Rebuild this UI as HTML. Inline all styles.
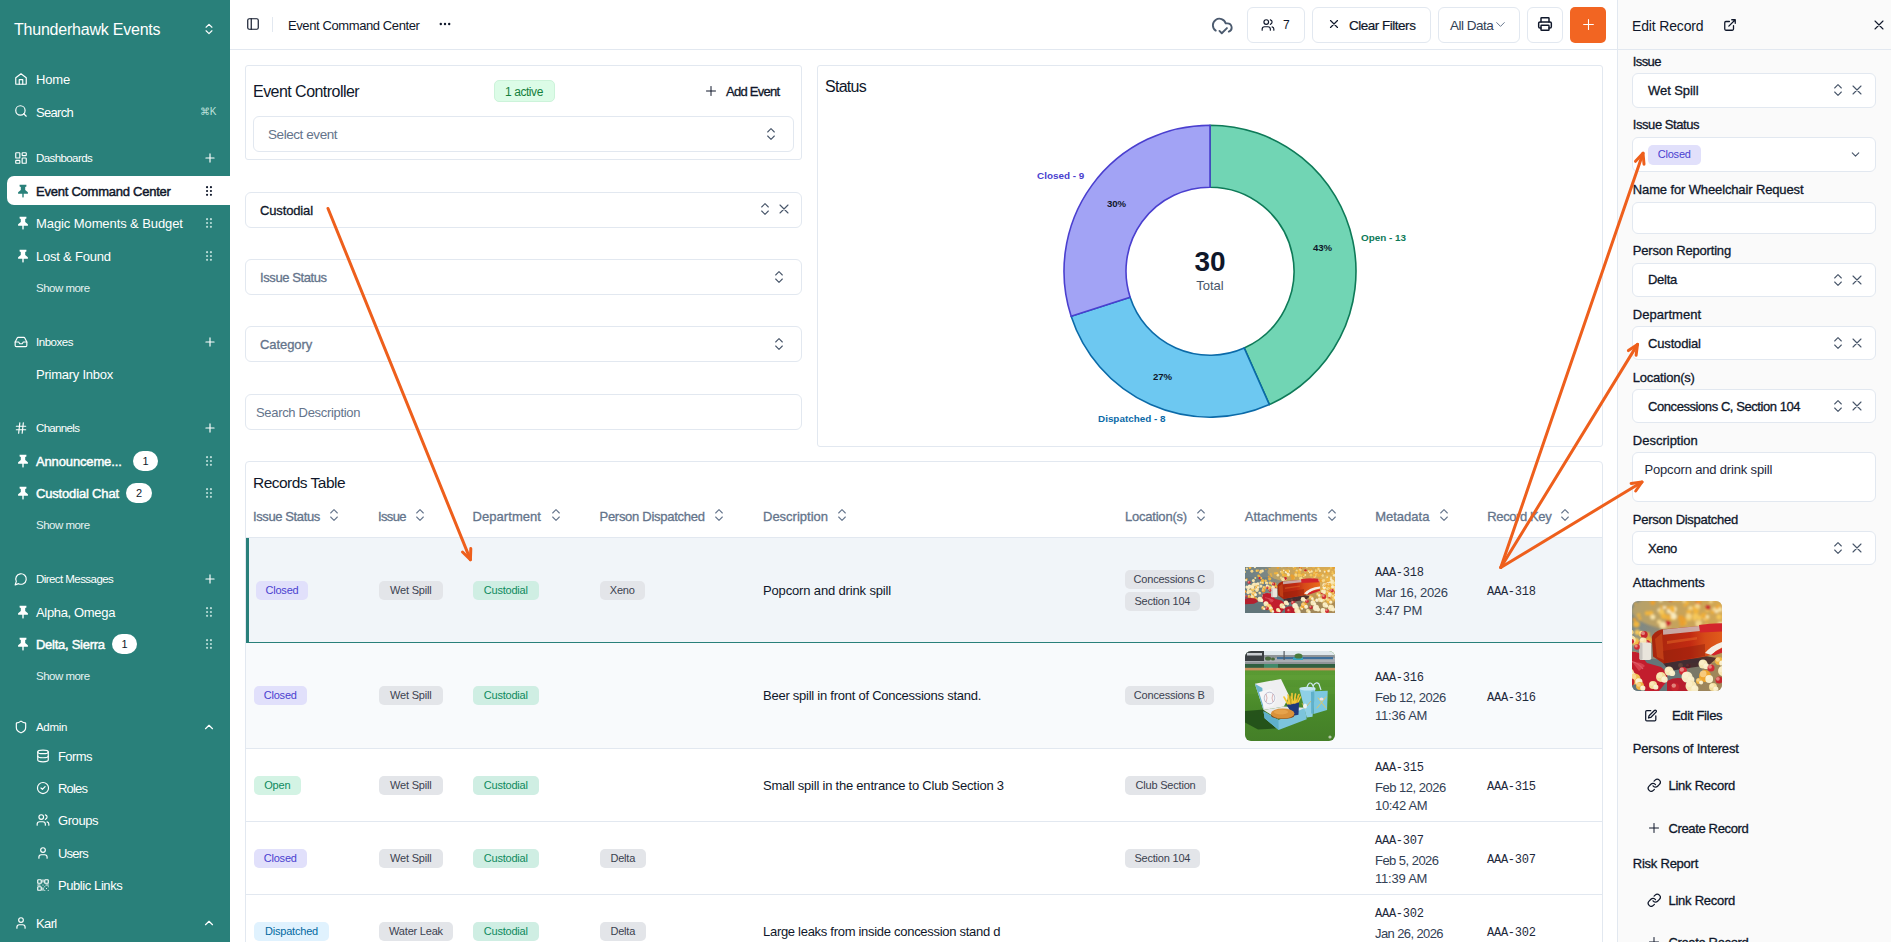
<!DOCTYPE html>
<html lang="en"><head>
<meta charset="utf-8">
<title>Event Command Center</title>
<style>
*{box-sizing:border-box;margin:0;padding:0}
html,body{width:1891px;height:942px;overflow:hidden;background:#fff}
body{font-family:"Liberation Sans",sans-serif;color:#0f172a;font-size:13px;position:relative;letter-spacing:-0.25px}
.abs{position:absolute}
.t{position:absolute;white-space:nowrap;line-height:1}
svg{display:block}
svg.ic{position:absolute;fill:none;stroke:currentColor;stroke-width:2;stroke-linecap:round;stroke-linejoin:round}
/* sidebar */
#sb{position:absolute;left:0;top:0;width:230px;height:942px;background:#29807a;color:#fff}
#sb .t{font-size:13px;margin-top:1px}
#sb .sec{font-size:11.5px}
#sb .sm{font-size:11.5px;color:#e6f2f1}
#sb .b{-webkit-text-stroke:0.45px}
.badge{position:absolute;height:20px;border-radius:10px;background:#fff;color:#0f172a;font-size:11px;text-align:center;line-height:20px;width:25px}
/* main */
.card{position:absolute;border:1px solid #e2e8f0;border-radius:3px;background:#fff}
.inp{position:absolute;border:1px solid #e2e8f0;border-radius:6px;background:#fff}
.ph{color:#64748b}
.btn{position:absolute;top:7px;height:35.500px;border:1px solid #e2e8f0;border-radius:6px;background:#fff}
.pill{position:absolute;height:19px;line-height:19px;border-radius:5px;font-size:11px;padding:0 10px;white-space:nowrap;letter-spacing:-0.2px}
.md{-webkit-text-stroke:0.3px}
.pill{text-align:center;padding:0}
.p-cl{background:#e1e0fb;color:#4a3fd0}
.p-op{background:#d3f3e4;color:#0e8a5e}
.p-di{background:#e0f2fe;color:#0369a1}
.p-gr{background:#e3e5e9;color:#3b4250}
.p-cu{background:#cfeee3;color:#0e8a5e}
.mono{font-family:"Liberation Mono",monospace;letter-spacing:-0.6px}
.th{position:absolute;top:510px;font-size:13px;color:#64748b;white-space:nowrap;line-height:1}
.lbl{position:absolute;left:1632px;font-size:13px;font-weight:bold;color:#0f172a;white-space:nowrap;line-height:1;letter-spacing:-0.45px}
.val{position:absolute;font-size:13px;font-weight:bold;color:#0f172a;white-space:nowrap;line-height:1;letter-spacing:-0.45px}
.lbl2{position:absolute;left:1632.800px;font-size:13px;color:#0f172a;white-space:nowrap;line-height:1;letter-spacing:-0.12px}
.val2{position:absolute;font-size:13px;color:#0f172a;white-space:nowrap;line-height:1;letter-spacing:-0.1px}
.bt2{letter-spacing:-0.32px}
</style>
</head>
<body>

<!-- ================= SIDEBAR ================= -->
<div id="sb">
  <div class="t" style="left: 14px; top: 20.5px; font-size: 16px; letter-spacing: -0.22px;">Thunderhawk Events</div>
  <svg class="ic" style="left:202px;top:22px" width="14" height="14" viewBox="0 0 24 24"><path d="M7 15l5 5 5-5M7 9l5-5 5 5"></path></svg>

  <svg class="ic" style="left:14px;top:72px" width="14" height="14" viewBox="0 0 24 24"><path d="M3 10l9-7 9 7v10a1 1 0 0 1-1 1H4a1 1 0 0 1-1-1z"></path><path d="M9 21v-8h6v8"></path></svg>
  <div class="t" style="left: 36px; top: 72px; letter-spacing: -0.17px;">Home</div>
  <svg class="ic" style="left:14px;top:104px" width="14" height="14" viewBox="0 0 24 24"><circle cx="11" cy="11" r="8"></circle><path d="M21 21l-4.3-4.3"></path></svg>
  <div class="t" style="left: 36px; top: 105px; letter-spacing: -0.7px;">Search</div>
  <div class="t" style="left:200px;top:106px;font-size:10px;color:#bfe0dc">⌘K</div>

  <svg class="ic" style="left:14px;top:151px" width="14" height="14" viewBox="0 0 24 24"><rect x="3" y="3" width="7" height="9" rx="1"></rect><rect x="14" y="3" width="7" height="5" rx="1"></rect><rect x="14" y="12" width="7" height="9" rx="1"></rect><rect x="3" y="16" width="7" height="5" rx="1"></rect></svg>
  <div class="t sec" style="left: 36px; top: 152px; letter-spacing: -0.59px;">Dashboards</div>
  <svg class="ic" style="left:203px;top:151px" width="14" height="14" viewBox="0 0 24 24"><path d="M5 12h14M12 5v14"></path></svg>

  <div class="abs" style="left:7px;top:176px;width:223px;height:29px;background:#fff;border-radius:7px 0 0 7px"></div>
  <div class="t b" style="left: 36px; top: 184px; color: rgb(15, 23, 42); letter-spacing: -0.24px;">Event Command Center</div>
  <div class="t" style="left: 36px; top: 216px; letter-spacing: -0.09px;">Magic Moments &amp; Budget</div>
  <div class="t" style="left: 36px; top: 249px; letter-spacing: -0.22px;">Lost &amp; Found</div>
  <div class="t sm" style="left: 36px; top: 282px; letter-spacing: -0.51px;">Show more</div>

  <svg class="ic" style="left:14px;top:335px" width="14" height="14" viewBox="0 0 24 24"><path d="M22 12h-6l-2 3h-4l-2-3H2"></path><path d="M5.5 5.1L2 12v6a2 2 0 0 0 2 2h16a2 2 0 0 0 2-2v-6l-3.5-6.9A2 2 0 0 0 16.8 4H7.2a2 2 0 0 0-1.7 1.1z"></path></svg>
  <div class="t sec" style="left: 36px; top: 336px; letter-spacing: -0.48px;">Inboxes</div>
  <svg class="ic" style="left:203px;top:335px" width="14" height="14" viewBox="0 0 24 24"><path d="M5 12h14M12 5v14"></path></svg>
  <div class="t" style="left: 36px; top: 367px; letter-spacing: -0.25px;">Primary Inbox</div>

  <svg class="ic" style="left:14px;top:421px" width="14" height="14" viewBox="0 0 24 24"><path d="M4 9h16M4 15h16M10 3L8 21M16 3l-2 18"></path></svg>
  <div class="t sec" style="left: 36px; top: 422px; letter-spacing: -0.67px;">Channels</div>
  <svg class="ic" style="left:203px;top:421px" width="14" height="14" viewBox="0 0 24 24"><path d="M5 12h14M12 5v14"></path></svg>
  <div class="t b" style="left: 36px; top: 454px; letter-spacing: -0.14px;">Announceme...</div>
  <div class="badge" style="left:133px;top:451px">1</div>
  <div class="t b" style="left: 36px; top: 486px; letter-spacing: -0.17px;">Custodial Chat</div>
  <div class="badge" style="left:126px;top:483px;width:26px">2</div>
  <div class="t sm" style="left: 36px; top: 519px; letter-spacing: -0.51px;">Show more</div>

  <svg class="ic" style="left:14px;top:572px" width="14" height="14" viewBox="0 0 24 24"><path d="M7.9 20A9 9 0 1 0 4 16.1L2 22z"></path></svg>
  <div class="t sec" style="left: 36px; top: 573px; letter-spacing: -0.56px;">Direct Messages</div>
  <svg class="ic" style="left:203px;top:572px" width="14" height="14" viewBox="0 0 24 24"><path d="M5 12h14M12 5v14"></path></svg>
  <div class="t" style="left: 36px; top: 605px; letter-spacing: -0.34px;">Alpha, Omega</div>
  <div class="t b" style="left: 36px; top: 637px; letter-spacing: -0.27px;">Delta, Sierra</div>
  <div class="badge" style="left:112px;top:634px">1</div>
  <div class="t sm" style="left: 36px; top: 670px; letter-spacing: -0.51px;">Show more</div>

  <svg class="ic" style="left:14px;top:720px" width="14" height="14" viewBox="0 0 24 24"><path d="M20 13c0 5-3.5 7.500-7.660 8.950a1 1 0 0 1-.670-.010C7.500 20.500 4 18 4 13V6a1 1 0 0 1 1-1c2 0 4.500-1.200 6.240-2.720a1.170 1.170 0 0 1 1.520 0C14.510 3.810 17 5 19 5a1 1 0 0 1 1 1z"></path></svg>
  <div class="t sec" style="left: 36px; top: 721px; letter-spacing: -0.32px;">Admin</div>
  <svg class="ic" style="left:202px;top:720px" width="14" height="14" viewBox="0 0 24 24"><path d="M18 15l-6-6-6 6"></path></svg>

  <svg class="ic" style="left:36px;top:749px" width="14" height="14" viewBox="0 0 24 24"><ellipse cx="12" cy="5" rx="9" ry="3"></ellipse><path d="M3 5v14a9 3 0 0 0 18 0V5"></path><path d="M3 12a9 3 0 0 0 18 0"></path></svg>
  <div class="t" style="left: 58px; top: 749px; letter-spacing: -0.59px;">Forms</div>
  <svg class="ic" style="left:36px;top:781px" width="14" height="14" viewBox="0 0 24 24"><circle cx="12" cy="12" r="9.500"></circle><path d="M8.500 12l2.500 2.500 4.500-5"></path></svg>
  <div class="t" style="left: 58px; top: 781px; letter-spacing: -0.81px;">Roles</div>
  <svg class="ic" style="left:36px;top:813px" width="14" height="14" viewBox="0 0 24 24"><path d="M16 21v-2a4 4 0 0 0-4-4H6a4 4 0 0 0-4 4v2"></path><circle cx="9" cy="7" r="4"></circle><path d="M22 21v-2a4 4 0 0 0-3-3.870M16 3.130a4 4 0 0 1 0 7.750"></path></svg>
  <div class="t" style="left: 58px; top: 813px; letter-spacing: -0.42px;">Groups</div>
  <svg class="ic" style="left:36px;top:846px" width="14" height="14" viewBox="0 0 24 24"><path d="M19 21v-2a4 4 0 0 0-4-4H9a4 4 0 0 0-4 4v2"></path><circle cx="12" cy="7" r="4"></circle></svg>
  <div class="t" style="left: 58px; top: 846px; letter-spacing: -0.79px;">Users</div>
  <svg class="ic" style="left:36px;top:878px" width="14" height="14" viewBox="0 0 24 24"><rect x="3" y="3" width="6" height="6" rx="1"></rect><rect x="15" y="3" width="6" height="6" rx="1"></rect><rect x="3" y="15" width="6" height="6" rx="1"></rect><path d="M21 15v.01M15 15h.01M15 21h.01M21 21v-.01M18 18h.01M12 3v4M12 12h.01M3 12h4M12 17v4M17 12h4"></path></svg>
  <div class="t" style="left: 58px; top: 878px; letter-spacing: -0.42px;">Public Links</div>

  <svg class="ic" style="left:14px;top:916px" width="14" height="14" viewBox="0 0 24 24"><path d="M19 21v-2a4 4 0 0 0-4-4H9a4 4 0 0 0-4 4v2"></path><circle cx="12" cy="7" r="4"></circle></svg>
  <div class="t" style="left: 36px; top: 916px; letter-spacing: -0.63px;">Karl</div>
  <svg class="ic" style="left:202px;top:916px" width="14" height="14" viewBox="0 0 24 24"><path d="M18 15l-6-6-6 6"></path></svg>
</div>
<svg width="0" height="0" style="position:absolute"><defs>
  <symbol id="pin" viewBox="0 0 12 14"><path d="M2.600 0.800h6.800v1.600l-1.200 0.700v2.800l2.700 2.400v1.500h-4.200v3l-0.700 1.200-0.700-1.200v-3h-4.200v-1.500l2.700-2.400v-2.800l-1.200-0.700z"></path></symbol>
  <symbol id="grip" viewBox="0 0 8 12"><circle cx="2.050" cy="2.200" r="1.100"></circle><circle cx="5.950" cy="2.200" r="1.100"></circle><circle cx="2.050" cy="6" r="1.100"></circle><circle cx="5.950" cy="6" r="1.100"></circle><circle cx="2.050" cy="9.800" r="1.100"></circle><circle cx="5.950" cy="9.800" r="1.100"></circle></symbol>
</defs></svg>
<svg class="abs" style="left:17px;top:184px;fill:#29807a" width="12" height="14"><use href="#pin"></use></svg>
<svg class="abs" style="left:17px;top:216px;fill:#fff" width="12" height="14"><use href="#pin"></use></svg>
<svg class="abs" style="left:17px;top:249px;fill:#fff" width="12" height="14"><use href="#pin"></use></svg>
<svg class="abs" style="left:17px;top:454px;fill:#fff" width="12" height="14"><use href="#pin"></use></svg>
<svg class="abs" style="left:17px;top:486px;fill:#fff" width="12" height="14"><use href="#pin"></use></svg>
<svg class="abs" style="left:17px;top:605px;fill:#fff" width="12" height="14"><use href="#pin"></use></svg>
<svg class="abs" style="left:17px;top:637px;fill:#fff" width="12" height="14"><use href="#pin"></use></svg>
<svg class="abs" style="left:205px;top:185px;fill:#0f172a" width="8" height="12"><use href="#grip"></use></svg>
<svg class="abs" style="left:205px;top:217px;fill:#b9dcd8" width="8" height="12"><use href="#grip"></use></svg>
<svg class="abs" style="left:205px;top:250px;fill:#b9dcd8" width="8" height="12"><use href="#grip"></use></svg>
<svg class="abs" style="left:205px;top:455px;fill:#b9dcd8" width="8" height="12"><use href="#grip"></use></svg>
<svg class="abs" style="left:205px;top:487px;fill:#b9dcd8" width="8" height="12"><use href="#grip"></use></svg>
<svg class="abs" style="left:205px;top:606px;fill:#b9dcd8" width="8" height="12"><use href="#grip"></use></svg>
<svg class="abs" style="left:205px;top:638px;fill:#b9dcd8" width="8" height="12"><use href="#grip"></use></svg>


<!-- ================= HEADER ================= -->
<div class="abs" style="left:230px;top:49px;width:1661px;height:1px;background:#e2e8f0"></div>
<div style="color:#0f172a">
<svg class="ic" style="left:246px;top:17px;stroke-width:2" width="14" height="14" viewBox="0 0 24 24"><rect x="3" y="3" width="18" height="18" rx="2.500"></rect><path d="M9 3v18"></path></svg>
<div class="abs" style="left:272px;top:17px;width:1px;height:15px;background:#e2e8f0"></div>
<div class="t" style="left: 288px; top: 19px; font-size: 13px; letter-spacing: -0.4px;">Event Command Center</div>
<svg class="abs" style="left:439px;top:22px;fill:#0f172a" width="12" height="4" viewBox="0 0 12 4"><circle cx="1.800" cy="2" r="1.200"></circle><circle cx="6" cy="2" r="1.200"></circle><circle cx="10.200" cy="2" r="1.200"></circle></svg>

<svg class="ic" style="left:1210.500px;top:14px;color:#4b5a6e;stroke-width:2" width="22.500" height="22.500" viewBox="0 0 24 24"><path d="M17 15l-5.500 5.500L9 18"></path><path d="M5 17.743A7 7 0 1 1 15.710 10h1.790a4.500 4.500 0 0 1 1.500 8.742"></path></svg>

<div class="btn" style="left:1247px;width:58px"></div>
<svg class="ic" style="left:1261px;top:18px;stroke-width:2" width="14" height="14" viewBox="0 0 24 24"><path d="M16 21v-2a4 4 0 0 0-4-4H6a4 4 0 0 0-4 4v2"></path><circle cx="9" cy="7" r="4"></circle><path d="M22 21v-2a4 4 0 0 0-3-3.870M16 3.130a4 4 0 0 1 0 7.750"></path></svg>
<div class="t" style="left:1283px;top:19px;font-size:12px">7</div>

<div class="btn" style="left:1312px;width:119px"></div>
<svg class="ic" style="left:1327px;top:17px;stroke-width:2" width="14" height="14" viewBox="0 0 24 24"><path d="M18 6L6 18M6 6l12 12"></path></svg>
<div class="t" style="left: 1349px; top: 19px; font-size: 13.5px; letter-spacing: -0.49px; -webkit-text-stroke: 0.2px rgb(15, 23, 42);">Clear Filters</div>

<div class="btn" style="left:1438px;width:82px"></div>
<div class="t" style="left: 1450px; top: 19px; font-size: 13.5px; letter-spacing: -0.51px; color: rgb(51, 65, 85);">All Data</div>
<svg class="ic" style="left:1494px;top:18px;color:#64748b;stroke-width:1.800" width="13" height="13" viewBox="0 0 24 24"><path d="M5 8.500l7 7 7-7"></path></svg>

<div class="btn" style="left:1527px;width:36px"></div>
<svg class="ic" style="left:1537px;top:16px;stroke-width:2.200" width="16" height="16" viewBox="0 0 24 24"><path d="M6 18H4.500a2 2 0 0 1-2-2v-5a2 2 0 0 1 2-2h15a2 2 0 0 1 2 2v5a2 2 0 0 1-2 2H18"></path><path d="M6 9V3.500a1 1 0 0 1 1-1h10a1 1 0 0 1 1 1V9"></path><rect x="6" y="14" width="12" height="7.500" rx="1"></rect></svg>

<div class="abs" style="left:1570px;top:7px;width:36px;height:36px;border-radius:5px;background:#f26522"></div>
<svg class="ic" style="left:1582px;top:18px;color:#fff;stroke-width:2" width="13" height="13" viewBox="0 0 24 24"><path d="M3 12h18M12 3v18"></path></svg>
</div>


<svg width="0" height="0" style="position:absolute"><defs>
  <symbol id="cud" viewBox="0 0 24 24"><path d="M7 15l5 5 5-5M7 9l5-5 5 5" fill="none" stroke-linecap="round" stroke-linejoin="round"></path></symbol>
  <symbol id="xx" viewBox="0 0 24 24"><path d="M18 6L6 18M6 6l12 12" fill="none" stroke-linecap="round" stroke-linejoin="round"></path></symbol>
</defs></svg>

<!-- Event Controller card -->
<div class="card" style="left:245px;top:65px;width:557px;height:95px"></div>
<div class="t" style="left: 253px; top: 84px; font-size: 16px; letter-spacing: -0.54px;">Event Controller</div>
<div class="abs" style="left:494px;top:80px;width:61px;height:22px;border-radius:5px;background:#dcfce7;border:1px solid #ccf3da"></div>
<div class="t" style="left: 505px; top: 86px; font-size: 12px; color: rgb(21, 128, 61); letter-spacing: -0.43px;">1 active</div>
<svg class="ic" style="left:705px;top:85px;stroke-width:2" width="12" height="12" viewBox="0 0 24 24"><path d="M3 12h18M12 3v18"></path></svg>
<div class="t md" style="left: 726px; top: 85px; font-size: 13px; letter-spacing: -0.72px;">Add Event</div>
<div class="inp" style="left:253px;top:116px;width:541px;height:36px"></div>
<div class="t ph" style="left: 268px; top: 128px; font-size: 13.5px; letter-spacing: -0.43px;">Select event</div>
<svg class="abs" style="left:763px;top:126px;stroke:#475569;stroke-width:1.6" width="16" height="16"><use href="#cud"></use></svg>

<!-- Filters -->
<div class="inp" style="left:245px;top:192px;width:557px;height:36px"></div>
<div class="t md" style="left: 260px; top: 204px; font-size: 13px; letter-spacing: -0.14px;">Custodial</div>
<svg class="abs" style="left:757px;top:201px;stroke:#475569;stroke-width:1.6" width="16" height="16"><use href="#cud"></use></svg>
<svg class="abs" style="left:776px;top:201px;stroke:#475569;stroke-width:1.6" width="16" height="16"><use href="#xx"></use></svg>

<div class="inp" style="left:245px;top:259px;width:557px;height:36px"></div>
<div class="t ph md" style="left: 260px; top: 271px; font-size: 13px; letter-spacing: -0.41px;">Issue Status</div>
<svg class="abs" style="left:771px;top:269px;stroke:#475569;stroke-width:1.6" width="16" height="16"><use href="#cud"></use></svg>

<div class="inp" style="left:245px;top:326px;width:557px;height:36px"></div>
<div class="t ph md" style="left: 260px; top: 338px; font-size: 13px; letter-spacing: -0.07px;">Category</div>
<svg class="abs" style="left:771px;top:336px;stroke:#475569;stroke-width:1.6" width="16" height="16"><use href="#cud"></use></svg>

<div class="inp" style="left:245px;top:394px;width:557px;height:36px"></div>
<div class="t ph" style="left: 256px; top: 406px; font-size: 13px; letter-spacing: -0.32px;">Search Description</div>

<!-- Status card -->
<div class="card" style="left:817px;top:65px;width:786px;height:382px"></div>
<div class="t" style="left: 825px; top: 79px; font-size: 16px; letter-spacing: -0.73px;">Status</div>
<svg class="abs" style="left:1010px;top:100px;overflow:visible" width="420" height="340" viewBox="1010 100 420 340">
  <g stroke-width="1.600" stroke-linejoin="round">
    <path d="M1210.00 125.20A146 146 0 0 1 1269.38 404.58L1244.17 347.94A84 84 0 0 0 1210.00 187.20Z" fill="#71d5b4" stroke="#0e7a58"></path>
    <path d="M1269.38 404.58A146 146 0 0 1 1071.15 316.32L1130.11 297.16A84 84 0 0 0 1244.17 347.94Z" fill="#6dc8f1" stroke="#0b6aa8"></path>
    <path d="M1071.15 316.32A146 146 0 0 1 1210.00 125.20L1210.00 187.20A84 84 0 0 0 1130.11 297.16Z" fill="#a2a3f5" stroke="#4a3fcf"></path>
  </g>
  <g font-family="Liberation Sans, sans-serif" font-weight="bold" letter-spacing="0">
    <text x="1037" y="179" font-size="9.900" fill="#4a3fcf">Closed - 9</text>
    <text x="1361" y="241" font-size="9.900" fill="#0e7a58">Open - 13</text>
    <text x="1098" y="422" font-size="9.900" fill="#0b6aa8">Dispatched - 8</text>
    <text x="1322.500" y="251" font-size="9.600" fill="#0f172a" text-anchor="middle">43%</text>
    <text x="1116.500" y="207" font-size="9.600" fill="#0f172a" text-anchor="middle">30%</text>
    <text x="1162.500" y="380" font-size="9.600" fill="#0f172a" text-anchor="middle">27%</text>
    <text x="1210" y="271" font-size="28" fill="#0f172a" text-anchor="middle">30</text>
    <text x="1210" y="290" font-size="13" fill="#475569" text-anchor="middle" font-weight="normal">Total</text>
  </g>
</svg>


<!-- Records table -->
<div class="card" style="left:245px;top:461px;width:1358px;height:500px;border-radius:4px 4px 0 0"></div>
<div class="t" style="left: 253px; top: 475px; font-size: 15.5px; letter-spacing: -0.52px;">Records Table</div>
<div class="th md" style="left: 253px; letter-spacing: -0.39px;">Issue Status</div>
<svg class="abs" style="left:326px;top:507px;stroke:#64748b;stroke-width:1.6" width="16" height="16"><use href="#cud"></use></svg>
<div class="th md" style="left: 378px; letter-spacing: -0.62px;">Issue</div>
<svg class="abs" style="left:412px;top:507px;stroke:#64748b;stroke-width:1.6" width="16" height="16"><use href="#cud"></use></svg>
<div class="th md" style="left: 472.5px; letter-spacing: 0.06px;">Department</div>
<svg class="abs" style="left:547.5px;top:507px;stroke:#64748b;stroke-width:1.6" width="16" height="16"><use href="#cud"></use></svg>
<div class="th md" style="left: 599.5px; letter-spacing: -0.28px;">Person Dispatched</div>
<svg class="abs" style="left:711.3px;top:507px;stroke:#64748b;stroke-width:1.6" width="16" height="16"><use href="#cud"></use></svg>
<div class="th md" style="left: 763px; letter-spacing: 0px;">Description</div>
<svg class="abs" style="left:834px;top:507px;stroke:#64748b;stroke-width:1.6" width="16" height="16"><use href="#cud"></use></svg>
<div class="th md" style="left: 1125px; letter-spacing: -0.22px;">Location(s)</div>
<svg class="abs" style="left:1193px;top:507px;stroke:#64748b;stroke-width:1.6" width="16" height="16"><use href="#cud"></use></svg>
<div class="th md" style="left: 1244.7px; letter-spacing: 0.02px;">Attachments</div>
<svg class="abs" style="left:1323.7px;top:507px;stroke:#64748b;stroke-width:1.6" width="16" height="16"><use href="#cud"></use></svg>
<div class="th md" style="left: 1375.2px; letter-spacing: 0px;">Metadata</div>
<svg class="abs" style="left:1436.3px;top:507px;stroke:#64748b;stroke-width:1.6" width="16" height="16"><use href="#cud"></use></svg>
<div class="th md" style="left: 1487.3px; letter-spacing: -0.39px;">Record Key</div>
<svg class="abs" style="left:1557px;top:507px;stroke:#64748b;stroke-width:1.6" width="16" height="16"><use href="#cud"></use></svg>
<div class="abs" style="left:246px;top:537px;width:1356px;height:1px;background:#e2e8f0"></div>
<div class="abs" style="left:246px;top:538px;width:1356px;height:104px;background:#f1f5f9"></div>
<div class="abs" style="left:246px;top:538px;width:3px;height:105px;background:#29807a"></div>
<div class="abs" style="left:246px;top:642px;width:1356px;height:1px;background:#29807a"></div>
<div class="abs" style="left:246px;top:643px;width:1356px;height:105px;background:#f8fafc"></div>
<div class="abs" style="left:246px;top:748px;width:1356px;height:1px;background:#e2e8f0"></div>
<div class="abs" style="left:246px;top:821px;width:1356px;height:1px;background:#e2e8f0"></div>
<div class="abs" style="left:246px;top:894px;width:1356px;height:1px;background:#e2e8f0"></div>
<div class="pill p-cl" style="left:256px;top:580.5px;width:52px">Closed</div>
<div class="pill p-gr" style="left:379px;top:580.5px;width:63.5px">Wet Spill</div>
<div class="pill p-cu" style="left:473px;top:580.5px;width:65.5px">Custodial</div>
<div class="pill p-gr" style="left:600px;top:580.5px;width:44.5px">Xeno</div>
<div class="t" style="left:763px;top:583.5px;font-size:13px;letter-spacing:-0.15px">Popcorn and drink spill</div>
<div class="pill p-gr" style="left:1125px;top:569.5px;width:88.5px">Concessions C</div>
<div class="pill p-gr" style="left:1125px;top:591.5px;width:74.7px">Section 104</div>
<div class="t mono" style="left: 1375px; top: 566.5px; font-size: 12px; color: rgb(30, 41, 59); letter-spacing: -0.26px;">AAA-318</div>
<div class="t" style="left: 1375px; top: 585.5px; font-size: 13px; color: rgb(51, 65, 85); letter-spacing: -0.33px;">Mar 16, 2026</div>
<div class="t" style="left: 1375px; top: 603.5px; font-size: 13px; color: rgb(51, 65, 85); letter-spacing: -0.19px;">3:47 PM</div>
<div class="t mono" style="left: 1487px; top: 586px; font-size: 12px; color: rgb(30, 41, 59); letter-spacing: -0.26px;">AAA-318</div>
<div class="pill p-cl" style="left:254px;top:686.0px;width:52.5px">Closed</div>
<div class="pill p-gr" style="left:379px;top:686.0px;width:63.5px">Wet Spill</div>
<div class="pill p-cu" style="left:473px;top:686.0px;width:65.5px">Custodial</div>
<div class="t" style="left: 763px; top: 689px; font-size: 13px; letter-spacing: -0.25px;">Beer spill in front of Concessions stand.</div>
<div class="pill p-gr" style="left:1125px;top:686.0px;width:88.5px">Concessions B</div>
<div class="t mono" style="left: 1375px; top: 672px; font-size: 12px; color: rgb(30, 41, 59); letter-spacing: -0.26px;">AAA-316</div>
<div class="t" style="left: 1375px; top: 691px; font-size: 13px; color: rgb(51, 65, 85); letter-spacing: -0.5px;">Feb 12, 2026</div>
<div class="t" style="left: 1375px; top: 709px; font-size: 13px; color: rgb(51, 65, 85); letter-spacing: -0.22px;">11:36 AM</div>
<div class="t mono" style="left: 1487px; top: 691.5px; font-size: 12px; color: rgb(30, 41, 59); letter-spacing: -0.26px;">AAA-316</div>
<div class="pill p-op" style="left:254px;top:775.5px;width:46.5px">Open</div>
<div class="pill p-gr" style="left:379px;top:775.5px;width:63.5px">Wet Spill</div>
<div class="pill p-cu" style="left:473px;top:775.5px;width:65.5px">Custodial</div>
<div class="t" style="left:763px;top:778.5px;font-size:13px;letter-spacing:-0.22px">Small spill in the entrance to Club Section 3</div>
<div class="pill p-gr" style="left:1125px;top:775.5px;width:81px">Club Section</div>
<div class="t mono" style="left: 1375px; top: 761.5px; font-size: 12px; color: rgb(30, 41, 59); letter-spacing: -0.26px;">AAA-315</div>
<div class="t" style="left: 1375px; top: 780.5px; font-size: 13px; color: rgb(51, 65, 85); letter-spacing: -0.5px;">Feb 12, 2026</div>
<div class="t" style="left: 1375px; top: 798.5px; font-size: 13px; color: rgb(51, 65, 85); letter-spacing: -0.34px;">10:42 AM</div>
<div class="t mono" style="left: 1487px; top: 781px; font-size: 12px; color: rgb(30, 41, 59); letter-spacing: -0.26px;">AAA-315</div>
<div class="pill p-cl" style="left:254px;top:848.5px;width:52.5px">Closed</div>
<div class="pill p-gr" style="left:379px;top:848.5px;width:63.5px">Wet Spill</div>
<div class="pill p-cu" style="left:473px;top:848.5px;width:65.5px">Custodial</div>
<div class="pill p-gr" style="left:600px;top:848.5px;width:45.5px">Delta</div>
<div class="pill p-gr" style="left:1125px;top:848.5px;width:74.7px">Section 104</div>
<div class="t mono" style="left: 1375px; top: 834.5px; font-size: 12px; color: rgb(30, 41, 59); letter-spacing: -0.26px;">AAA-307</div>
<div class="t" style="left: 1375px; top: 853.5px; font-size: 13px; color: rgb(51, 65, 85); letter-spacing: -0.54px;">Feb 5, 2026</div>
<div class="t" style="left: 1375px; top: 871.5px; font-size: 13px; color: rgb(51, 65, 85); letter-spacing: -0.22px;">11:39 AM</div>
<div class="t mono" style="left: 1487px; top: 854px; font-size: 12px; color: rgb(30, 41, 59); letter-spacing: -0.26px;">AAA-307</div>
<div class="pill p-di" style="left:254px;top:921.5px;width:75px">Dispatched</div>
<div class="pill p-gr" style="left:379px;top:921.5px;width:74px">Water Leak</div>
<div class="pill p-cu" style="left:473px;top:921.5px;width:65.5px">Custodial</div>
<div class="pill p-gr" style="left:600px;top:921.5px;width:45.5px">Delta</div>
<div class="t" style="left: 763px; top: 924.5px; font-size: 13px; letter-spacing: -0.29px;">Large leaks from inside concession stand d</div>
<div class="t mono" style="left: 1375px; top: 907.5px; font-size: 12px; color: rgb(30, 41, 59); letter-spacing: -0.26px;">AAA-302</div>
<div class="t" style="left: 1375px; top: 926.5px; font-size: 13px; color: rgb(51, 65, 85); letter-spacing: -0.6px;">Jan 26, 2026</div>
<div class="t mono" style="left: 1487px; top: 927px; font-size: 12px; color: rgb(30, 41, 59); letter-spacing: -0.26px;">AAA-302</div>
<svg width="0" height="0" style="position:absolute"><defs>
<filter id="bl1" x="-20%" y="-20%" width="140%" height="140%"><feGaussianBlur stdDeviation="1.300"></feGaussianBlur></filter>
<filter id="bl2" x="-20%" y="-20%" width="140%" height="140%"><feGaussianBlur stdDeviation="0.500"></feGaussianBlur></filter>
<linearGradient id="pcbg" x1="0" y1="0" x2="1" y2="0"><stop offset="0" stop-color="#6c7f85"></stop><stop offset="0.300" stop-color="#7f8985"></stop><stop offset="0.550" stop-color="#a98f5f"></stop><stop offset="1" stop-color="#d3a24c"></stop></linearGradient>
<linearGradient id="btl" x1="0" y1="0" x2="1" y2="0"><stop offset="0" stop-color="#a6260d"></stop><stop offset="0.450" stop-color="#c22a12"></stop><stop offset="0.620" stop-color="#d54a18"></stop><stop offset="1" stop-color="#ea6c1c"></stop></linearGradient>
<symbol id="popimg" viewBox="0 0 180 90" preserveAspectRatio="none">
<rect width="180" height="90" fill="url(#pcbg)"></rect>
<path d="M0 58h120l-14 32h-106z" fill="#5f7379" opacity="0.900"></path><path d="M100 62h80v28h-90z" fill="#8a7a5c" opacity="0.550"></path>
<path d="M0 20h45l-5 30h-40z" fill="#66797f" opacity="0.600"></path>
<ellipse cx="120" cy="10" rx="75" ry="22" fill="#e4b455" opacity="0.550" filter="url(#bl1)"></ellipse><ellipse cx="165" cy="45" rx="22" ry="30" fill="#e8bd62" opacity="0.500" filter="url(#bl1)"></ellipse><g filter="url(#bl1)">
<circle cx="81.2" cy="23.7" r="2.6" fill="#f3d58a"></circle>
<circle cx="111.0" cy="6.6" r="1.7" fill="#f3d58a"></circle>
<circle cx="175.5" cy="28.1" r="2.2" fill="#f2b53c"></circle>
<circle cx="106.7" cy="7.0" r="1.9" fill="#f2b53c"></circle>
<circle cx="181.2" cy="36.6" r="2.7" fill="#f6e2a8"></circle>
<circle cx="3.5" cy="23.9" r="2.0" fill="#eaa030"></circle>
<circle cx="174.3" cy="37.0" r="2.5" fill="#f2b53c"></circle>
<circle cx="178.4" cy="16.3" r="2.7" fill="#f8e9bd"></circle>
<circle cx="60.0" cy="12.3" r="2.2" fill="#f2b53c"></circle>
<circle cx="128.1" cy="-1.5" r="1.9" fill="#ecae3e"></circle>
<circle cx="80.3" cy="6.8" r="1.7" fill="#ecae3e"></circle>
<circle cx="157.0" cy="42.8" r="4.2" fill="#f2b53c"></circle>
<circle cx="16.5" cy="43.5" r="2.7" fill="#f8e9bd"></circle>
<circle cx="150.8" cy="15.8" r="2.0" fill="#ecae3e"></circle>
<circle cx="108.6" cy="15.1" r="3.1" fill="#f5c75a"></circle>
<circle cx="131.5" cy="5.3" r="2.2" fill="#ecae3e"></circle>
<circle cx="160.3" cy="25.8" r="2.0" fill="#f2b53c"></circle>
<circle cx="111.3" cy="1.4" r="2.6" fill="#c8262e"></circle>
<circle cx="47.5" cy="18.5" r="2.0" fill="#eaa030"></circle>
<circle cx="177.0" cy="2.2" r="2.0" fill="#eaa030"></circle>
<circle cx="125.2" cy="24.9" r="1.9" fill="#f2b53c"></circle>
<circle cx="63.8" cy="12.3" r="2.5" fill="#f2b53c"></circle>
<circle cx="163.6" cy="31.9" r="3.4" fill="#eaa030"></circle>
<circle cx="132.0" cy="15.9" r="2.6" fill="#f5c75a"></circle>
<circle cx="97.6" cy="21.9" r="2.3" fill="#f2b53c"></circle>
<circle cx="119.4" cy="18.3" r="2.2" fill="#ecae3e"></circle>
<circle cx="34.9" cy="7.9" r="2.8" fill="#f6e2a8"></circle>
<circle cx="29.1" cy="18.7" r="2.1" fill="#f5c75a"></circle>
<circle cx="152.9" cy="26.7" r="3.3" fill="#eaa030"></circle>
<circle cx="54.9" cy="34.4" r="2.3" fill="#f5c75a"></circle>
<circle cx="139.5" cy="10.3" r="2.7" fill="#ecae3e"></circle>
<circle cx="65.8" cy="1.6" r="2.5" fill="#eaa030"></circle>
<circle cx="31.0" cy="10.5" r="2.6" fill="#f3d58a"></circle>
<circle cx="181.4" cy="5.3" r="2.4" fill="#f6e2a8"></circle>
<circle cx="169.6" cy="31.2" r="2.8" fill="#ecae3e"></circle>
<circle cx="58.1" cy="43.2" r="3.9" fill="#f8e9bd"></circle>
<circle cx="130.0" cy="7.8" r="2.9" fill="#eaa030"></circle>
<circle cx="143.5" cy="12.7" r="2.9" fill="#eaa030"></circle>
<circle cx="48.6" cy="40.3" r="3.9" fill="#f5c75a"></circle>
<circle cx="172.0" cy="20.7" r="1.9" fill="#f6e2a8"></circle>
<circle cx="158.1" cy="26.0" r="2.1" fill="#f3d58a"></circle>
<circle cx="103.4" cy="7.2" r="2.2" fill="#f3d58a"></circle>
<circle cx="97.1" cy="0.0" r="2.1" fill="#f3d58a"></circle>
<circle cx="72.4" cy="9.3" r="2.0" fill="#f8e9bd"></circle>
<circle cx="167.3" cy="22.1" r="2.5" fill="#f2b53c"></circle>
<circle cx="21.8" cy="33.8" r="2.4" fill="#c8262e"></circle>
<circle cx="50.3" cy="31.3" r="2.9" fill="#f5c75a"></circle>
<circle cx="20.6" cy="21.5" r="2.1" fill="#f3d58a"></circle>
<circle cx="111.3" cy="22.8" r="2.7" fill="#f6e2a8"></circle>
<circle cx="154.6" cy="26.1" r="2.3" fill="#ecae3e"></circle>
<circle cx="161.9" cy="7.0" r="1.8" fill="#f2b53c"></circle>
<circle cx="42.0" cy="31.4" r="2.1" fill="#f8e9bd"></circle>
<circle cx="102.9" cy="14.4" r="2.2" fill="#ecae3e"></circle>
<circle cx="137.5" cy="21.1" r="2.1" fill="#f2b53c"></circle>
<circle cx="164.5" cy="20.1" r="1.9" fill="#f6e2a8"></circle>
<circle cx="180.2" cy="40.6" r="2.3" fill="#ecae3e"></circle>
<circle cx="138.7" cy="13.0" r="2.4" fill="#f5c75a"></circle>
<circle cx="15.4" cy="34.4" r="2.2" fill="#f8e9bd"></circle>
<circle cx="156.4" cy="27.0" r="2.9" fill="#f3d58a"></circle>
<circle cx="60.7" cy="33.1" r="2.2" fill="#ecae3e"></circle>
<circle cx="147.9" cy="16.7" r="3.1" fill="#ecae3e"></circle>
<circle cx="77.4" cy="6.4" r="1.7" fill="#f8e9bd"></circle>
<circle cx="84.3" cy="-1.5" r="2.1" fill="#c8262e"></circle>
<circle cx="48.2" cy="42.2" r="2.6" fill="#f5c75a"></circle>
<circle cx="178.3" cy="-1.0" r="2.3" fill="#eaa030"></circle>
<circle cx="-0.0" cy="9.9" r="2.0" fill="#f3d58a"></circle>
<circle cx="169.1" cy="5.4" r="1.7" fill="#f5c75a"></circle>
<circle cx="107.8" cy="17.8" r="2.1" fill="#f5c75a"></circle>
<circle cx="101.2" cy="11.0" r="2.0" fill="#f2b53c"></circle>
<circle cx="123.9" cy="0.4" r="1.9" fill="#f3d58a"></circle>
<circle cx="171.8" cy="1.4" r="1.9" fill="#f5c75a"></circle>
<circle cx="137.0" cy="0.1" r="2.4" fill="#f5c75a"></circle>
<circle cx="174.6" cy="9.3" r="1.6" fill="#f5c75a"></circle>
<circle cx="81.8" cy="10.1" r="2.2" fill="#f8e9bd"></circle>
<circle cx="148.0" cy="4.3" r="1.6" fill="#f5c75a"></circle>
<circle cx="162.3" cy="34.1" r="2.7" fill="#eaa030"></circle>
<circle cx="45.8" cy="-0.8" r="1.6" fill="#eaa030"></circle>
<circle cx="114.1" cy="15.2" r="2.0" fill="#eaa030"></circle>
<circle cx="139.5" cy="18.4" r="2.3" fill="#f6e2a8"></circle>
<circle cx="76.7" cy="15.0" r="3.0" fill="#f2b53c"></circle>
<circle cx="77.5" cy="24.1" r="2.6" fill="#f8e9bd"></circle>
<circle cx="125.7" cy="11.0" r="2.1" fill="#ecae3e"></circle>
<circle cx="164.8" cy="12.8" r="2.5" fill="#ecae3e"></circle>
<circle cx="162.6" cy="9.4" r="2.1" fill="#eaa030"></circle>
<circle cx="65.8" cy="16.0" r="2.6" fill="#f6e2a8"></circle>
<circle cx="146.0" cy="0.9" r="2.4" fill="#f2b53c"></circle>
<circle cx="48.4" cy="2.8" r="1.4" fill="#ecae3e"></circle>
<circle cx="138.7" cy="16.1" r="3.2" fill="#ecae3e"></circle>
<circle cx="111.7" cy="0.1" r="2.6" fill="#eaa030"></circle>
<circle cx="174.2" cy="27.5" r="3.1" fill="#f8e9bd"></circle>
<circle cx="167.9" cy="40.1" r="2.4" fill="#ecae3e"></circle>
<circle cx="51.7" cy="42.6" r="2.8" fill="#f2b53c"></circle>
<circle cx="136.6" cy="-1.2" r="2.3" fill="#eaa030"></circle>
<circle cx="32.0" cy="8.0" r="2.5" fill="#f3d58a"></circle>
<circle cx="165.6" cy="41.1" r="4.0" fill="#f3d58a"></circle>
<circle cx="86.8" cy="8.2" r="2.9" fill="#f8e9bd"></circle>
<circle cx="177.6" cy="34.6" r="3.5" fill="#f2b53c"></circle>
<circle cx="109.5" cy="5.2" r="1.9" fill="#eaa030"></circle>
<circle cx="147.0" cy="4.0" r="2.3" fill="#f3d58a"></circle>
<circle cx="25.7" cy="33.4" r="3.5" fill="#f8e9bd"></circle>
<circle cx="91.1" cy="-1.1" r="1.6" fill="#ecae3e"></circle>
<circle cx="150.0" cy="7.6" r="2.2" fill="#f6e2a8"></circle>
<circle cx="175.4" cy="12.5" r="2.4" fill="#f5c75a"></circle>
<circle cx="10.3" cy="1.4" r="2.3" fill="#ecae3e"></circle>
<circle cx="175.9" cy="36.2" r="2.1" fill="#f5c75a"></circle>
<circle cx="85.4" cy="11.5" r="2.7" fill="#f8e9bd"></circle>
<circle cx="145.1" cy="7.5" r="1.9" fill="#f5c75a"></circle>
<circle cx="100.2" cy="2.0" r="1.9" fill="#f2b53c"></circle>
<circle cx="171.9" cy="23.9" r="2.4" fill="#f8e9bd"></circle>
<circle cx="16.7" cy="26.6" r="3.0" fill="#f6e2a8"></circle>
<circle cx="14.6" cy="8.4" r="1.7" fill="#f5c75a"></circle>
<circle cx="23.6" cy="7.5" r="2.5" fill="#f5c75a"></circle>
<circle cx="73.8" cy="-1.3" r="2.2" fill="#f8e9bd"></circle>
<circle cx="119.5" cy="26.0" r="2.4" fill="#eaa030"></circle>
<circle cx="79.2" cy="23.6" r="2.4" fill="#eaa030"></circle>
<circle cx="110.5" cy="5.3" r="2.7" fill="#f3d58a"></circle>
<circle cx="110.6" cy="21.6" r="2.1" fill="#f3d58a"></circle>
<circle cx="132.3" cy="9.0" r="2.3" fill="#f2b53c"></circle>
<circle cx="148.4" cy="25.7" r="3.3" fill="#eaa030"></circle>
<circle cx="81.6" cy="16.6" r="3.1" fill="#ecae3e"></circle>
<circle cx="27.2" cy="17.0" r="2.5" fill="#f2b53c"></circle>
<circle cx="30.0" cy="21.9" r="2.7" fill="#c8262e"></circle>
<circle cx="72.2" cy="20.9" r="2.3" fill="#f3d58a"></circle>
<circle cx="101.9" cy="16.7" r="3.1" fill="#f5c75a"></circle>
<circle cx="155.3" cy="16.8" r="2.6" fill="#f3d58a"></circle>
<circle cx="93.8" cy="17.3" r="3.1" fill="#eaa030"></circle>
<circle cx="163.6" cy="31.7" r="3.3" fill="#eaa030"></circle>
<circle cx="159.4" cy="9.2" r="1.9" fill="#f8e9bd"></circle>
<circle cx="175.8" cy="28.6" r="2.7" fill="#f8e9bd"></circle>
<circle cx="117.5" cy="17.4" r="1.8" fill="#f3d58a"></circle>
<circle cx="-1.9" cy="9.2" r="2.0" fill="#f2b53c"></circle>
<circle cx="80.8" cy="22.4" r="2.9" fill="#c8262e"></circle>
<circle cx="3.7" cy="39.3" r="3.1" fill="#f8e9bd"></circle>
<circle cx="85.0" cy="7.5" r="2.8" fill="#f2b53c"></circle>
<circle cx="152.2" cy="14.3" r="1.9" fill="#ecae3e"></circle>
<circle cx="35.2" cy="27.1" r="3.4" fill="#f2b53c"></circle>
<circle cx="74.4" cy="5.8" r="1.6" fill="#ecae3e"></circle>
<circle cx="143.5" cy="15.1" r="3.0" fill="#f3d58a"></circle>
<circle cx="177.8" cy="39.2" r="2.5" fill="#f6e2a8"></circle>
<circle cx="95.2" cy="22.4" r="2.8" fill="#eaa030"></circle>
<circle cx="75.9" cy="24.2" r="3.5" fill="#f6e2a8"></circle>
<circle cx="49.4" cy="23.2" r="3.3" fill="#f2b53c"></circle>
<circle cx="166.6" cy="24.9" r="3.4" fill="#f2b53c"></circle>
<circle cx="141.5" cy="5.6" r="1.8" fill="#f5c75a"></circle>
<circle cx="109.0" cy="10.0" r="3.0" fill="#f2b53c"></circle>
<circle cx="158.6" cy="6.3" r="1.5" fill="#f5c75a"></circle>
<circle cx="3.7" cy="3.3" r="2.3" fill="#f3d58a"></circle>
<circle cx="41.8" cy="4.7" r="1.5" fill="#eaa030"></circle>
<circle cx="119.3" cy="25.4" r="2.4" fill="#f5c75a"></circle>
<circle cx="37.8" cy="42.6" r="3.2" fill="#f8e9bd"></circle>
<circle cx="179.4" cy="-1.8" r="2.0" fill="#f2b53c"></circle>
<circle cx="52.8" cy="17.5" r="1.7" fill="#ecae3e"></circle>
<circle cx="133.1" cy="8.6" r="2.3" fill="#f6e2a8"></circle>
<circle cx="13.8" cy="8.5" r="2.9" fill="#f3d58a"></circle>
<circle cx="133.7" cy="24.1" r="3.3" fill="#f6e2a8"></circle>
<circle cx="141.8" cy="7.9" r="1.8" fill="#f3d58a"></circle>
<circle cx="86.4" cy="16.4" r="2.9" fill="#f5c75a"></circle>
<circle cx="180.8" cy="29.2" r="2.3" fill="#f5c75a"></circle>
<circle cx="112.3" cy="21.9" r="2.6" fill="#f3d58a"></circle>
<circle cx="129.6" cy="10.4" r="1.8" fill="#f8e9bd"></circle>
<circle cx="13.3" cy="38.6" r="3.6" fill="#f3d58a"></circle>
<circle cx="32.5" cy="21.6" r="2.1" fill="#f5c75a"></circle>
<circle cx="98.1" cy="4.3" r="1.8" fill="#ecae3e"></circle>
<circle cx="96.4" cy="18.7" r="2.5" fill="#eaa030"></circle>
<circle cx="51.7" cy="13.9" r="1.7" fill="#f2b53c"></circle>
<circle cx="86.8" cy="-1.5" r="2.3" fill="#ecae3e"></circle>
<circle cx="167.1" cy="7.9" r="2.5" fill="#f8e9bd"></circle>
<circle cx="41.2" cy="27.1" r="2.6" fill="#f5c75a"></circle>
<circle cx="127.4" cy="8.2" r="1.8" fill="#f8e9bd"></circle>
<circle cx="120.4" cy="9.0" r="2.0" fill="#f5c75a"></circle>
<circle cx="86.0" cy="9.8" r="2.0" fill="#f2b53c"></circle>
<circle cx="11.3" cy="-0.4" r="1.8" fill="#eaa030"></circle>
<circle cx="120.9" cy="6.6" r="2.3" fill="#c8262e"></circle>
<circle cx="128.1" cy="8.0" r="1.6" fill="#f3d58a"></circle>
<circle cx="74.5" cy="10.7" r="2.9" fill="#f5c75a"></circle>
<circle cx="1.9" cy="25.8" r="2.3" fill="#f6e2a8"></circle>
<circle cx="61.8" cy="38.8" r="3.5" fill="#ecae3e"></circle>
<circle cx="26.8" cy="6.8" r="2.0" fill="#ecae3e"></circle>
<circle cx="101.7" cy="15.0" r="2.8" fill="#f3d58a"></circle>
<circle cx="116.9" cy="14.7" r="3.1" fill="#ecae3e"></circle>
<circle cx="9.6" cy="1.2" r="2.3" fill="#f2b53c"></circle>
<circle cx="112.4" cy="17.0" r="2.2" fill="#f5c75a"></circle>
<circle cx="144.5" cy="16.0" r="2.1" fill="#ecae3e"></circle>
<circle cx="31.8" cy="37.4" r="3.2" fill="#f6e2a8"></circle>
<circle cx="171.1" cy="42.6" r="3.6" fill="#f5c75a"></circle>
<circle cx="120.5" cy="15.8" r="1.9" fill="#f6e2a8"></circle>
<circle cx="19.8" cy="-0.0" r="2.3" fill="#f8e9bd"></circle>
<circle cx="86.9" cy="15.2" r="2.9" fill="#f8e9bd"></circle>
<circle cx="163.0" cy="38.5" r="2.4" fill="#f2b53c"></circle>
<circle cx="102.7" cy="10.6" r="2.0" fill="#f2b53c"></circle>
</g>
<g filter="url(#bl2)">
<circle cx="54.9" cy="32.8" r="3.1" fill="#f5c75a"></circle><circle cx="54.0" cy="31.7" r="1.7" fill="#fff7dc" opacity="0.450"></circle>
<circle cx="44.4" cy="36.8" r="2.6" fill="#f7ecc8"></circle><circle cx="43.7" cy="35.9" r="1.5" fill="#fff7dc" opacity="0.450"></circle>
<circle cx="171.1" cy="31.7" r="3.9" fill="#f6e2a8"></circle><circle cx="169.9" cy="30.3" r="2.1" fill="#fff7dc" opacity="0.450"></circle>
<circle cx="170.2" cy="47.4" r="2.9" fill="#c8262e"></circle><circle cx="169.4" cy="46.3" r="1.6" fill="#fff7dc" opacity="0.450"></circle>
<circle cx="180.6" cy="52.6" r="2.8" fill="#f6e2a8"></circle><circle cx="179.8" cy="51.6" r="1.5" fill="#fff7dc" opacity="0.450"></circle>
<circle cx="57.2" cy="33.4" r="3.5" fill="#c8262e"></circle><circle cx="56.1" cy="32.2" r="1.9" fill="#fff7dc" opacity="0.450"></circle>
<circle cx="22.1" cy="41.0" r="2.8" fill="#eaa030"></circle><circle cx="21.2" cy="40.0" r="1.6" fill="#fff7dc" opacity="0.450"></circle>
<circle cx="-0.3" cy="48.1" r="2.8" fill="#c8262e"></circle><circle cx="-1.1" cy="47.1" r="1.5" fill="#fff7dc" opacity="0.450"></circle>
<circle cx="161.4" cy="59.3" r="2.9" fill="#ecae3e"></circle><circle cx="160.5" cy="58.2" r="1.6" fill="#fff7dc" opacity="0.450"></circle>
<circle cx="165.6" cy="32.0" r="2.8" fill="#f7ecc8"></circle><circle cx="164.8" cy="31.0" r="1.6" fill="#fff7dc" opacity="0.450"></circle>
<circle cx="169.4" cy="35.5" r="4.0" fill="#ecae3e"></circle><circle cx="168.2" cy="34.1" r="2.2" fill="#fff7dc" opacity="0.450"></circle>
<circle cx="163.1" cy="34.0" r="3.9" fill="#eaa030"></circle><circle cx="162.0" cy="32.6" r="2.1" fill="#fff7dc" opacity="0.450"></circle>
<circle cx="180.8" cy="32.3" r="3.5" fill="#f3d58a"></circle><circle cx="179.8" cy="31.1" r="1.9" fill="#fff7dc" opacity="0.450"></circle>
<circle cx="175.0" cy="38.6" r="3.0" fill="#f7ecc8"></circle><circle cx="174.1" cy="37.5" r="1.6" fill="#fff7dc" opacity="0.450"></circle>
<circle cx="11.3" cy="47.9" r="3.8" fill="#f6e2a8"></circle><circle cx="10.1" cy="46.6" r="2.1" fill="#fff7dc" opacity="0.450"></circle>
<circle cx="25.9" cy="43.2" r="2.3" fill="#ecae3e"></circle><circle cx="25.2" cy="42.4" r="1.2" fill="#fff7dc" opacity="0.450"></circle>
<circle cx="38.4" cy="40.4" r="3.3" fill="#f2b53c"></circle><circle cx="37.4" cy="39.2" r="1.8" fill="#fff7dc" opacity="0.450"></circle>
<circle cx="11.2" cy="65.6" r="3.3" fill="#f5c75a"></circle><circle cx="10.2" cy="64.4" r="1.8" fill="#fff7dc" opacity="0.450"></circle>
<circle cx="181.0" cy="43.6" r="3.5" fill="#f3d58a"></circle><circle cx="179.9" cy="42.4" r="1.9" fill="#fff7dc" opacity="0.450"></circle>
<circle cx="29.6" cy="50.9" r="2.7" fill="#f3d58a"></circle><circle cx="28.7" cy="50.0" r="1.5" fill="#fff7dc" opacity="0.450"></circle>
<circle cx="55.1" cy="44.7" r="3.3" fill="#f8e9bd"></circle><circle cx="54.1" cy="43.5" r="1.8" fill="#fff7dc" opacity="0.450"></circle>
<circle cx="22.6" cy="34.4" r="3.1" fill="#f8e9bd"></circle><circle cx="21.7" cy="33.4" r="1.7" fill="#fff7dc" opacity="0.450"></circle>
<circle cx="158.6" cy="40.3" r="3.4" fill="#f7ecc8"></circle><circle cx="157.5" cy="39.1" r="1.9" fill="#fff7dc" opacity="0.450"></circle>
<circle cx="47.2" cy="53.8" r="3.3" fill="#f2b53c"></circle><circle cx="46.3" cy="52.7" r="1.8" fill="#fff7dc" opacity="0.450"></circle>
<circle cx="22.3" cy="62.2" r="3.0" fill="#ecae3e"></circle><circle cx="21.4" cy="61.2" r="1.6" fill="#fff7dc" opacity="0.450"></circle>
<circle cx="159.9" cy="57.7" r="3.4" fill="#f7ecc8"></circle><circle cx="158.9" cy="56.5" r="1.9" fill="#fff7dc" opacity="0.450"></circle>
<circle cx="14.3" cy="43.1" r="3.5" fill="#ecae3e"></circle><circle cx="13.2" cy="41.9" r="1.9" fill="#fff7dc" opacity="0.450"></circle>
<circle cx="9.2" cy="38.0" r="3.6" fill="#f8e9bd"></circle><circle cx="8.1" cy="36.7" r="2.0" fill="#fff7dc" opacity="0.450"></circle>
<circle cx="181.6" cy="32.4" r="2.9" fill="#f5c75a"></circle><circle cx="180.7" cy="31.4" r="1.6" fill="#fff7dc" opacity="0.450"></circle>
<circle cx="15.6" cy="58.6" r="3.9" fill="#f3d58a"></circle><circle cx="14.5" cy="57.2" r="2.2" fill="#fff7dc" opacity="0.450"></circle>
<circle cx="176.5" cy="47.1" r="3.0" fill="#c8262e"></circle><circle cx="175.6" cy="46.0" r="1.6" fill="#fff7dc" opacity="0.450"></circle>
<circle cx="156.2" cy="64.0" r="2.2" fill="#ecae3e"></circle><circle cx="155.5" cy="63.2" r="1.2" fill="#fff7dc" opacity="0.450"></circle>
<circle cx="101.2" cy="65.1" r="2.4" fill="#c8262e"></circle><circle cx="100.5" cy="64.2" r="1.3" fill="#fff7dc" opacity="0.450"></circle>
<circle cx="54.8" cy="42.7" r="3.3" fill="#c8262e"></circle><circle cx="53.8" cy="41.6" r="1.8" fill="#fff7dc" opacity="0.450"></circle>
<circle cx="17.2" cy="60.6" r="3.9" fill="#eaa030"></circle><circle cx="16.0" cy="59.2" r="2.2" fill="#fff7dc" opacity="0.450"></circle>
<circle cx="175.3" cy="44.9" r="2.5" fill="#f6e2a8"></circle><circle cx="174.6" cy="44.0" r="1.4" fill="#fff7dc" opacity="0.450"></circle>
<circle cx="6.5" cy="45.0" r="2.7" fill="#f6e2a8"></circle><circle cx="5.7" cy="44.0" r="1.5" fill="#fff7dc" opacity="0.450"></circle>
<circle cx="15.9" cy="52.5" r="3.3" fill="#f5c75a"></circle><circle cx="14.9" cy="51.4" r="1.8" fill="#fff7dc" opacity="0.450"></circle>
<circle cx="16.3" cy="43.4" r="3.1" fill="#f5c75a"></circle><circle cx="15.3" cy="42.3" r="1.7" fill="#fff7dc" opacity="0.450"></circle>
<circle cx="17.3" cy="54.8" r="2.6" fill="#ecae3e"></circle><circle cx="16.5" cy="53.8" r="1.5" fill="#fff7dc" opacity="0.450"></circle>
<circle cx="36.6" cy="57.5" r="2.5" fill="#f6e2a8"></circle><circle cx="35.8" cy="56.6" r="1.4" fill="#fff7dc" opacity="0.450"></circle>
<circle cx="15.1" cy="39.1" r="3.6" fill="#f8e9bd"></circle><circle cx="14.0" cy="37.8" r="2.0" fill="#fff7dc" opacity="0.450"></circle>
<circle cx="44.1" cy="31.2" r="2.5" fill="#f3d58a"></circle><circle cx="43.3" cy="30.3" r="1.4" fill="#fff7dc" opacity="0.450"></circle>
<circle cx="8.4" cy="57.5" r="3.3" fill="#eaa030"></circle><circle cx="7.4" cy="56.3" r="1.8" fill="#fff7dc" opacity="0.450"></circle>
<circle cx="169.9" cy="57.1" r="2.2" fill="#f7ecc8"></circle><circle cx="169.3" cy="56.3" r="1.2" fill="#fff7dc" opacity="0.450"></circle>
<circle cx="123.1" cy="65.4" r="2.3" fill="#f6e2a8"></circle><circle cx="122.4" cy="64.6" r="1.3" fill="#fff7dc" opacity="0.450"></circle>
<circle cx="18.8" cy="34.3" r="3.9" fill="#f6e2a8"></circle><circle cx="17.7" cy="32.9" r="2.2" fill="#fff7dc" opacity="0.450"></circle>
<circle cx="158.8" cy="47.0" r="3.0" fill="#f8e9bd"></circle><circle cx="157.9" cy="46.0" r="1.6" fill="#fff7dc" opacity="0.450"></circle>
<circle cx="44.9" cy="38.8" r="3.8" fill="#f6e2a8"></circle><circle cx="43.7" cy="37.4" r="2.1" fill="#fff7dc" opacity="0.450"></circle>
<circle cx="177.5" cy="62.7" r="3.1" fill="#f5c75a"></circle><circle cx="176.6" cy="61.7" r="1.7" fill="#fff7dc" opacity="0.450"></circle>
<circle cx="180.8" cy="42.7" r="3.1" fill="#f7ecc8"></circle><circle cx="179.9" cy="41.6" r="1.7" fill="#fff7dc" opacity="0.450"></circle>
<circle cx="173.0" cy="57.5" r="2.4" fill="#eaa030"></circle><circle cx="172.2" cy="56.7" r="1.3" fill="#fff7dc" opacity="0.450"></circle>
<circle cx="163.5" cy="63.3" r="2.9" fill="#f3d58a"></circle><circle cx="162.6" cy="62.3" r="1.6" fill="#fff7dc" opacity="0.450"></circle>
<circle cx="150.8" cy="65.4" r="2.8" fill="#eaa030"></circle><circle cx="150.0" cy="64.4" r="1.6" fill="#fff7dc" opacity="0.450"></circle>
<circle cx="44.7" cy="40.5" r="2.4" fill="#c8262e"></circle><circle cx="43.9" cy="39.7" r="1.3" fill="#fff7dc" opacity="0.450"></circle>
<circle cx="14.4" cy="58.8" r="3.6" fill="#f3d58a"></circle><circle cx="13.4" cy="57.6" r="2.0" fill="#fff7dc" opacity="0.450"></circle>
<circle cx="168.5" cy="56.7" r="2.2" fill="#f6e2a8"></circle><circle cx="167.8" cy="56.0" r="1.2" fill="#fff7dc" opacity="0.450"></circle>
<circle cx="23.9" cy="44.9" r="3.8" fill="#f6e2a8"></circle><circle cx="22.7" cy="43.5" r="2.1" fill="#fff7dc" opacity="0.450"></circle>
<circle cx="168.3" cy="61.7" r="2.5" fill="#c8262e"></circle><circle cx="167.5" cy="60.8" r="1.3" fill="#fff7dc" opacity="0.450"></circle>
<circle cx="176.9" cy="50.2" r="2.7" fill="#ecae3e"></circle><circle cx="176.1" cy="49.3" r="1.5" fill="#fff7dc" opacity="0.450"></circle>
<circle cx="158.5" cy="35.6" r="3.6" fill="#f7ecc8"></circle><circle cx="157.5" cy="34.3" r="2.0" fill="#fff7dc" opacity="0.450"></circle>
<circle cx="181.4" cy="50.6" r="2.8" fill="#c8262e"></circle><circle cx="180.5" cy="49.6" r="1.5" fill="#fff7dc" opacity="0.450"></circle>
<circle cx="93.5" cy="64.5" r="2.4" fill="#f3d58a"></circle><circle cx="92.8" cy="63.7" r="1.3" fill="#fff7dc" opacity="0.450"></circle>
<circle cx="59.7" cy="42.5" r="3.6" fill="#c8262e"></circle><circle cx="58.7" cy="41.2" r="2.0" fill="#fff7dc" opacity="0.450"></circle>
<circle cx="36.9" cy="46.2" r="3.9" fill="#eaa030"></circle><circle cx="35.7" cy="44.9" r="2.1" fill="#fff7dc" opacity="0.450"></circle>
<circle cx="159.4" cy="36.6" r="2.7" fill="#ecae3e"></circle><circle cx="158.5" cy="35.7" r="1.5" fill="#fff7dc" opacity="0.450"></circle>
<circle cx="35.6" cy="31.2" r="2.4" fill="#f5c75a"></circle><circle cx="34.9" cy="30.4" r="1.3" fill="#fff7dc" opacity="0.450"></circle>
<circle cx="6.3" cy="50.1" r="3.4" fill="#f6e2a8"></circle><circle cx="5.2" cy="48.9" r="1.9" fill="#fff7dc" opacity="0.450"></circle>
<circle cx="180.2" cy="43.9" r="3.6" fill="#f5c75a"></circle><circle cx="179.2" cy="42.7" r="2.0" fill="#fff7dc" opacity="0.450"></circle>
<circle cx="0.5" cy="48.0" r="2.3" fill="#eaa030"></circle><circle cx="-0.1" cy="47.2" r="1.3" fill="#fff7dc" opacity="0.450"></circle>
<circle cx="169.4" cy="42.3" r="2.5" fill="#ecae3e"></circle><circle cx="168.7" cy="41.4" r="1.4" fill="#fff7dc" opacity="0.450"></circle>
<circle cx="160.4" cy="56.2" r="3.0" fill="#ecae3e"></circle><circle cx="159.5" cy="55.1" r="1.7" fill="#fff7dc" opacity="0.450"></circle>
<circle cx="168.0" cy="35.3" r="4.0" fill="#ecae3e"></circle><circle cx="166.8" cy="33.9" r="2.2" fill="#fff7dc" opacity="0.450"></circle>
<circle cx="169.9" cy="54.4" r="3.9" fill="#f6e2a8"></circle><circle cx="168.7" cy="53.0" r="2.2" fill="#fff7dc" opacity="0.450"></circle>
<circle cx="143.9" cy="65.0" r="3.3" fill="#f7ecc8"></circle><circle cx="142.9" cy="63.9" r="1.8" fill="#fff7dc" opacity="0.450"></circle>
<circle cx="2.5" cy="57.5" r="2.3" fill="#c8262e"></circle><circle cx="1.8" cy="56.7" r="1.3" fill="#fff7dc" opacity="0.450"></circle>
<circle cx="174.9" cy="30.9" r="3.9" fill="#f6e2a8"></circle><circle cx="173.7" cy="29.5" r="2.2" fill="#fff7dc" opacity="0.450"></circle>
<circle cx="31.6" cy="30.5" r="2.3" fill="#f3d58a"></circle><circle cx="30.9" cy="29.8" r="1.3" fill="#fff7dc" opacity="0.450"></circle>
<circle cx="44.1" cy="56.7" r="2.5" fill="#f8e9bd"></circle><circle cx="43.4" cy="55.9" r="1.4" fill="#fff7dc" opacity="0.450"></circle>
<circle cx="172.7" cy="47.7" r="3.3" fill="#eaa030"></circle><circle cx="171.7" cy="46.5" r="1.8" fill="#fff7dc" opacity="0.450"></circle>
<circle cx="55.7" cy="50.0" r="3.5" fill="#ecae3e"></circle><circle cx="54.6" cy="48.8" r="1.9" fill="#fff7dc" opacity="0.450"></circle>
<circle cx="15.8" cy="54.7" r="3.2" fill="#f7ecc8"></circle><circle cx="14.9" cy="53.6" r="1.8" fill="#fff7dc" opacity="0.450"></circle>
<circle cx="153.8" cy="50.5" r="2.8" fill="#c8262e"></circle><circle cx="153.0" cy="49.5" r="1.5" fill="#fff7dc" opacity="0.450"></circle>
<circle cx="7.3" cy="40.1" r="3.2" fill="#f8e9bd"></circle><circle cx="6.3" cy="39.0" r="1.8" fill="#fff7dc" opacity="0.450"></circle>
<circle cx="172.0" cy="47.6" r="2.7" fill="#ecae3e"></circle><circle cx="171.2" cy="46.7" r="1.5" fill="#fff7dc" opacity="0.450"></circle>
<circle cx="43.4" cy="56.3" r="2.7" fill="#eaa030"></circle><circle cx="42.6" cy="55.3" r="1.5" fill="#fff7dc" opacity="0.450"></circle>
<circle cx="157.2" cy="65.1" r="2.7" fill="#f3d58a"></circle><circle cx="156.4" cy="64.2" r="1.5" fill="#fff7dc" opacity="0.450"></circle>
<circle cx="137.5" cy="65.5" r="2.4" fill="#f2b53c"></circle><circle cx="136.8" cy="64.6" r="1.3" fill="#fff7dc" opacity="0.450"></circle>
<circle cx="39.4" cy="55.6" r="3.8" fill="#f7ecc8"></circle><circle cx="38.3" cy="54.3" r="2.1" fill="#fff7dc" opacity="0.450"></circle>
<circle cx="56.1" cy="39.8" r="3.4" fill="#f6e2a8"></circle><circle cx="55.1" cy="38.6" r="1.9" fill="#fff7dc" opacity="0.450"></circle>
</g>
<path d="M0 62q12-3 22 0l4 6-8 4-18 1z" fill="#b3202e"></path>
<path d="M36 53q8-4 16-1l8 10 14 4q8 6 6 14l-8 10h-14q-2-10-10-14l-10-4q-6-8-2-19z" fill="#c21d2d"></path><path d="M40 60q10 0 16 8" stroke="#e8808a" stroke-width="1.200" fill="none" opacity="0.700"></path>
<path d="M46 62q8-2 12 3l-6 5z" fill="#e0505c" opacity="0.700"></path>
<path d="M80 80q8-5 18-2l4 12h-22z" fill="#b81d2c"></path>
<path d="M76 62l42-7 12 2-8 7-40 6z" fill="#3a1c22" opacity="0.800"></path>
<path d="M64.800 36q2-5 9.300-7.400l38.600-3.500 36.200 0q2 10 1.100 21l-31.500 9.400-42 7-10.500-7z" fill="url(#btl)"></path>
<path d="M76 28.400l36.600-3.300 36.300 0 0.200 3.500-36 1.300-37 3.800z" fill="#cfd3d6" opacity="0.750"></path>
<path d="M112 24q18-3 34-1l2 7-35 1.500z" fill="#d3242c"></path>
<path d="M118 52q10-12 32-14l0.300 4q-18 3-26 12z" fill="#f3ede4"></path>
<path d="M124 54q10-9 26-10l0 2.500-23 8z" fill="#d3242c"></path>
<path d="M68 38l7-6 2 27-7 -3z" fill="#d2521e" opacity="0.550"></path><path d="M76 50l42-7 0 12-41 7z" fill="#8e1c0c" opacity="0.450"></path>
<path d="M80 40l30-4 0 2.500-30 4.500z" fill="#e8702a" opacity="0.450"></path>
<rect x="52.500" y="41.500" width="11.700" height="17.500" rx="1.800" fill="#e9e5dc"></rect>
<rect x="52.500" y="41.500" width="3" height="17.500" rx="1.500" fill="#c9c6c0"></rect>
<circle cx="18.0" cy="52.0" r="4.5" fill="#f0b441"></circle><circle cx="16.6" cy="50.4" r="2.5" fill="#fff7dc" opacity="0.450"></circle>
<circle cx="21.1" cy="54.2" r="2.9" fill="#f8edc8"></circle><circle cx="20.3" cy="53.2" r="1.6" fill="#fff7dc" opacity="0.450"></circle>
<circle cx="30.0" cy="63.0" r="5.0" fill="#f6e6b4"></circle><circle cx="28.5" cy="61.2" r="2.8" fill="#fff7dc" opacity="0.450"></circle>
<circle cx="33.5" cy="65.5" r="3.2" fill="#f8edc8"></circle><circle cx="32.5" cy="64.4" r="1.8" fill="#fff7dc" opacity="0.450"></circle>
<circle cx="42.0" cy="72.0" r="5.0" fill="#f6e6b4"></circle><circle cx="40.5" cy="70.2" r="2.8" fill="#fff7dc" opacity="0.450"></circle>
<circle cx="45.5" cy="74.5" r="3.2" fill="#f8edc8"></circle><circle cx="44.5" cy="73.4" r="1.8" fill="#fff7dc" opacity="0.450"></circle>
<circle cx="48.0" cy="78.0" r="5.5" fill="#f2c050"></circle><circle cx="46.4" cy="76.1" r="3.0" fill="#fff7dc" opacity="0.450"></circle>
<circle cx="51.9" cy="80.8" r="3.6" fill="#f8edc8"></circle><circle cx="50.8" cy="79.5" r="2.0" fill="#fff7dc" opacity="0.450"></circle>
<circle cx="44.0" cy="81.0" r="3.5" fill="#c8262e"></circle><circle cx="43.0" cy="79.8" r="1.9" fill="#fff7dc" opacity="0.450"></circle>
<circle cx="53.0" cy="85.0" r="4.0" fill="#f0b441"></circle><circle cx="51.8" cy="83.6" r="2.2" fill="#fff7dc" opacity="0.450"></circle>
<circle cx="55.8" cy="87.0" r="2.6" fill="#f8edc8"></circle><circle cx="55.0" cy="86.1" r="1.4" fill="#fff7dc" opacity="0.450"></circle>
<circle cx="8.0" cy="30.0" r="3.0" fill="#d32a34"></circle><circle cx="7.1" cy="28.9" r="1.7" fill="#fff7dc" opacity="0.450"></circle>
<circle cx="24.0" cy="38.0" r="3.5" fill="#f0b441"></circle><circle cx="22.9" cy="36.8" r="1.9" fill="#fff7dc" opacity="0.450"></circle>
<circle cx="26.4" cy="39.8" r="2.3" fill="#f8edc8"></circle><circle cx="25.8" cy="39.0" r="1.3" fill="#fff7dc" opacity="0.450"></circle>
<circle cx="50.0" cy="46.0" r="2.8" fill="#d32a34"></circle><circle cx="49.2" cy="45.0" r="1.5" fill="#fff7dc" opacity="0.450"></circle>
<circle cx="74.0" cy="76.0" r="5.0" fill="#f3dc9a"></circle><circle cx="72.5" cy="74.2" r="2.8" fill="#fff7dc" opacity="0.450"></circle>
<circle cx="77.5" cy="78.5" r="3.2" fill="#f8edc8"></circle><circle cx="76.5" cy="77.4" r="1.8" fill="#fff7dc" opacity="0.450"></circle>
<circle cx="82.0" cy="70.0" r="4.5" fill="#f6e6b4"></circle><circle cx="80.7" cy="68.4" r="2.5" fill="#fff7dc" opacity="0.450"></circle>
<circle cx="85.2" cy="72.2" r="2.9" fill="#f8edc8"></circle><circle cx="84.3" cy="71.2" r="1.6" fill="#fff7dc" opacity="0.450"></circle>
<circle cx="96.0" cy="70.0" r="4.0" fill="#d32a34"></circle><circle cx="94.8" cy="68.6" r="2.2" fill="#fff7dc" opacity="0.450"></circle>
<circle cx="100.0" cy="76.0" r="5.5" fill="#f7ecc8"></circle><circle cx="98.3" cy="74.1" r="3.0" fill="#fff7dc" opacity="0.450"></circle>
<circle cx="103.8" cy="78.8" r="3.6" fill="#f8edc8"></circle><circle cx="102.8" cy="77.5" r="2.0" fill="#fff7dc" opacity="0.450"></circle>
<circle cx="104.0" cy="85.0" r="5.5" fill="#f6e6b4"></circle><circle cx="102.3" cy="83.1" r="3.0" fill="#fff7dc" opacity="0.450"></circle>
<circle cx="107.8" cy="87.8" r="3.6" fill="#f8edc8"></circle><circle cx="106.8" cy="86.5" r="2.0" fill="#fff7dc" opacity="0.450"></circle>
<circle cx="118.0" cy="75.0" r="6.0" fill="#f0a62e"></circle><circle cx="116.2" cy="72.9" r="3.3" fill="#fff7dc" opacity="0.450"></circle>
<circle cx="122.2" cy="78.0" r="3.9" fill="#f8edc8"></circle><circle cx="121.0" cy="76.6" r="2.1" fill="#fff7dc" opacity="0.450"></circle>
<circle cx="116.0" cy="63.0" r="4.5" fill="#f6e6b4"></circle><circle cx="114.7" cy="61.4" r="2.5" fill="#fff7dc" opacity="0.450"></circle>
<circle cx="119.2" cy="65.2" r="2.9" fill="#f8edc8"></circle><circle cx="118.3" cy="64.2" r="1.6" fill="#fff7dc" opacity="0.450"></circle>
<circle cx="124.0" cy="67.0" r="3.5" fill="#d32a34"></circle><circle cx="123.0" cy="65.8" r="1.9" fill="#fff7dc" opacity="0.450"></circle>
<circle cx="88.0" cy="86.0" r="4.0" fill="#c8262e"></circle><circle cx="86.8" cy="84.6" r="2.2" fill="#fff7dc" opacity="0.450"></circle>
<circle cx="132.0" cy="60.0" r="4.0" fill="#f0b441"></circle><circle cx="130.8" cy="58.6" r="2.2" fill="#fff7dc" opacity="0.450"></circle>
<circle cx="134.8" cy="62.0" r="2.6" fill="#f8edc8"></circle><circle cx="134.0" cy="61.1" r="1.4" fill="#fff7dc" opacity="0.450"></circle>
<circle cx="136.0" cy="70.0" r="5.0" fill="#f6e6b4"></circle><circle cx="134.5" cy="68.2" r="2.8" fill="#fff7dc" opacity="0.450"></circle>
<circle cx="139.5" cy="72.5" r="3.2" fill="#f8edc8"></circle><circle cx="138.5" cy="71.4" r="1.8" fill="#fff7dc" opacity="0.450"></circle>
<circle cx="142.0" cy="80.0" r="6.0" fill="#f7ecc8"></circle><circle cx="140.2" cy="77.9" r="3.3" fill="#fff7dc" opacity="0.450"></circle>
<circle cx="146.2" cy="83.0" r="3.9" fill="#f8edc8"></circle><circle cx="145.0" cy="81.6" r="2.1" fill="#fff7dc" opacity="0.450"></circle>
<circle cx="132.0" cy="79.0" r="3.5" fill="#c8262e"></circle><circle cx="130.9" cy="77.8" r="1.9" fill="#fff7dc" opacity="0.450"></circle>
<circle cx="150.0" cy="64.0" r="4.5" fill="#f3dc9a"></circle><circle cx="148.7" cy="62.4" r="2.5" fill="#fff7dc" opacity="0.450"></circle>
<circle cx="153.2" cy="66.2" r="2.9" fill="#f8edc8"></circle><circle cx="152.3" cy="65.2" r="1.6" fill="#fff7dc" opacity="0.450"></circle>
<circle cx="158.0" cy="58.0" r="4.5" fill="#d32a34"></circle><circle cx="156.7" cy="56.4" r="2.5" fill="#fff7dc" opacity="0.450"></circle>
<circle cx="160.0" cy="74.0" r="5.0" fill="#f6e6b4"></circle><circle cx="158.5" cy="72.2" r="2.8" fill="#fff7dc" opacity="0.450"></circle>
<circle cx="163.5" cy="76.5" r="3.2" fill="#f8edc8"></circle><circle cx="162.5" cy="75.4" r="1.8" fill="#fff7dc" opacity="0.450"></circle>
<circle cx="156.0" cy="85.0" r="5.0" fill="#f7ecc8"></circle><circle cx="154.5" cy="83.2" r="2.8" fill="#fff7dc" opacity="0.450"></circle>
<circle cx="159.5" cy="87.5" r="3.2" fill="#f8edc8"></circle><circle cx="158.5" cy="86.4" r="1.8" fill="#fff7dc" opacity="0.450"></circle>
<circle cx="168.0" cy="66.0" r="5.0" fill="#f0b441"></circle><circle cx="166.5" cy="64.2" r="2.8" fill="#fff7dc" opacity="0.450"></circle>
<circle cx="171.5" cy="68.5" r="3.2" fill="#f8edc8"></circle><circle cx="170.5" cy="67.4" r="1.8" fill="#fff7dc" opacity="0.450"></circle>
<circle cx="172.0" cy="80.0" r="6.0" fill="#f6e6b4"></circle><circle cx="170.2" cy="77.9" r="3.3" fill="#fff7dc" opacity="0.450"></circle>
<circle cx="176.2" cy="83.0" r="3.9" fill="#f8edc8"></circle><circle cx="175.0" cy="81.6" r="2.1" fill="#fff7dc" opacity="0.450"></circle>
<circle cx="177.0" cy="58.0" r="4.0" fill="#f2c050"></circle><circle cx="175.8" cy="56.6" r="2.2" fill="#fff7dc" opacity="0.450"></circle>
<circle cx="179.8" cy="60.0" r="2.6" fill="#f8edc8"></circle><circle cx="179.0" cy="59.1" r="1.4" fill="#fff7dc" opacity="0.450"></circle>
<circle cx="166.0" cy="50.0" r="4.0" fill="#f0a62e"></circle><circle cx="164.8" cy="48.6" r="2.2" fill="#fff7dc" opacity="0.450"></circle>
<circle cx="168.8" cy="52.0" r="2.6" fill="#f8edc8"></circle><circle cx="168.0" cy="51.1" r="1.4" fill="#fff7dc" opacity="0.450"></circle>
<circle cx="174.0" cy="46.0" r="3.5" fill="#d32a34"></circle><circle cx="172.9" cy="44.8" r="1.9" fill="#fff7dc" opacity="0.450"></circle>
<circle cx="156.0" cy="48.0" r="4.0" fill="#f6e2a8"></circle><circle cx="154.8" cy="46.6" r="2.2" fill="#fff7dc" opacity="0.450"></circle>
<circle cx="158.8" cy="50.0" r="2.6" fill="#f8edc8"></circle><circle cx="158.0" cy="49.1" r="1.4" fill="#fff7dc" opacity="0.450"></circle>
<circle cx="146.0" cy="54.0" r="3.5" fill="#f2c050"></circle><circle cx="144.9" cy="52.8" r="1.9" fill="#fff7dc" opacity="0.450"></circle>
<circle cx="148.4" cy="55.8" r="2.3" fill="#f8edc8"></circle><circle cx="147.8" cy="55.0" r="1.3" fill="#fff7dc" opacity="0.450"></circle>
<circle cx="164.0" cy="86.0" r="4.0" fill="#d32a34"></circle><circle cx="162.8" cy="84.6" r="2.2" fill="#fff7dc" opacity="0.450"></circle>
<circle cx="126.0" cy="86.0" r="4.0" fill="#f3dc9a"></circle><circle cx="124.8" cy="84.6" r="2.2" fill="#fff7dc" opacity="0.450"></circle>
<circle cx="128.8" cy="88.0" r="2.6" fill="#f8edc8"></circle><circle cx="128.0" cy="87.1" r="1.4" fill="#fff7dc" opacity="0.450"></circle>
<circle cx="112.0" cy="80.0" r="3.0" fill="#f0b441"></circle><circle cx="111.1" cy="79.0" r="1.7" fill="#fff7dc" opacity="0.450"></circle>
<circle cx="114.1" cy="81.5" r="2.0" fill="#f8edc8"></circle><circle cx="113.5" cy="80.8" r="1.1" fill="#fff7dc" opacity="0.450"></circle>
<circle cx="66.0" cy="84.0" r="4.0" fill="#f3dc9a"></circle><circle cx="64.8" cy="82.6" r="2.2" fill="#fff7dc" opacity="0.450"></circle>
<circle cx="68.8" cy="86.0" r="2.6" fill="#f8edc8"></circle><circle cx="68.0" cy="85.1" r="1.4" fill="#fff7dc" opacity="0.450"></circle>
<circle cx="36.0" cy="80.0" r="3.5" fill="#f0b441"></circle><circle cx="35.0" cy="78.8" r="1.9" fill="#fff7dc" opacity="0.450"></circle>
<circle cx="38.5" cy="81.8" r="2.3" fill="#f8edc8"></circle><circle cx="37.8" cy="81.0" r="1.3" fill="#fff7dc" opacity="0.450"></circle>
</symbol>
<linearGradient id="grs" x1="0" y1="0" x2="0" y2="1"><stop offset="0" stop-color="#4d8f2c"></stop><stop offset="0.25" stop-color="#5a9a33"></stop><stop offset="0.6" stop-color="#4a8a2a"></stop><stop offset="1" stop-color="#447f28"></stop></linearGradient>
<symbol id="foodimg" viewBox="0 0 90 90">
<rect width="90" height="90" fill="url(#grs)"></rect>
<rect width="90" height="6" fill="#dfe7ec"></rect>
<rect y="4" width="90" height="10" fill="#8f9498"></rect>
<rect y="7" width="90" height="4" fill="#a9adb2"></rect>
<rect width="19" height="10" fill="#3b3f42"></rect>
<rect x="2" y="2" width="15" height="2.500" fill="#c9ccd0"></rect>
<rect x="32" y="6" width="56" height="2.200" fill="#3f6f9a"></rect>
<rect x="48" y="6.500" width="10" height="2.500" fill="#3aa6c0"></rect>
<rect x="38.500" y="0" width="1.200" height="9" fill="#555a60"></rect>
<ellipse cx="53.500" cy="5" rx="4" ry="2.600" fill="#4a7a3c"></ellipse>
<ellipse cx="23" cy="7.500" rx="3" ry="2" fill="#4a6a3c"></ellipse><ellipse cx="28" cy="8" rx="2" ry="1.500" fill="#4a6a3c"></ellipse>
<rect y="13" width="90" height="4" fill="#2f5f40"></rect>
<rect x="19" y="13" width="14" height="4" fill="#3f8a6a"></rect>
<rect y="16.800" width="90" height="2.600" fill="#c8905e"></rect>
<rect y="24" width="90" height="5" fill="#63a238" opacity="0.5"></rect>
<rect y="36" width="90" height="7" fill="#5c9c34" opacity="0.35"></rect>
<path d="M0 60l19-1.500 12 19-18 1-13-7z" fill="#1f4a17" opacity="0.85"></path>
<path d="M9.900 32.700l26.100-4.700 8.200 17-5.300 10.500-20.400 3.500z" fill="#efeff1"></path>
<path d="M9.900 32.700l8.600 26.300-1.200-22z" fill="#6bb4cc"></path>
<path d="M14 41l12-3 6 9-4 8-9 2z" fill="#f6f6f8"></path>
<ellipse cx="24.500" cy="47" rx="5.300" ry="5.800" fill="none" stroke="#8c8fb0" stroke-width="0.500"></ellipse><path d="M21 43q2 4 0 8M28 43q-2 4 0 8" fill="none" stroke="#c07070" stroke-width="0.500"></path>
<path d="M18.500 59l20.400-3.500 21 1.200-8 9-19 2z" fill="#e6e8ea"></path>
<path d="M18.500 60.200l15 8.800 26.400-12.300 1.800 11.600-28.100 10.600-14-11.700z" fill="#7cc4dc"></path>
<path d="M18.500 60.200l15 8.800 0.100 9.900-14-11.700z" fill="#5fb0cb"></path>
<path d="M41.200 53.200l12.900-2.400-0.600 12.900-5.300 1.100z" fill="#1f3a7c"></path>
<g stroke="#f4c838" stroke-width="1.600" stroke-linecap="round"><path d="M43 53l-4-7M45 53l-2-9M47 52.500l0-10M49 52l1.500-9M51 51.500l3-8M53 51l2.500-5M44 52l-1-5M48 52l-1.500-6M50 52l0-5"></path></g>
<g stroke="#e3a91e" stroke-width="0.900" stroke-linecap="round"><path d="M46 53l-1-8M52 51.500l1-7"></path></g>
<ellipse cx="37.700" cy="64.400" rx="11.700" ry="3.600" fill="#7a4a1e"></ellipse>
<ellipse cx="37.700" cy="62.600" rx="11.700" ry="5" fill="#d9913a"></ellipse>
<ellipse cx="36" cy="61" rx="7" ry="2.400" fill="#e8a850" opacity="0.8"></ellipse>
<path d="M54.400 38l16-1.200-2.900 29-5.800 0.600z" fill="#8fd0e6"></path>
<ellipse cx="62.400" cy="37.600" rx="8.100" ry="1.900" fill="#c4e6f2"></ellipse>
<path d="M57 52l3 6M62 55l4-5" stroke="#e3b84a" stroke-width="0.700"></path><ellipse cx="60" cy="55" rx="2" ry="2.600" fill="#eef2f4"></ellipse>
<path d="M69.300 40.300l13.400-0.600-0.600 19.300-13.400 4.100z" fill="#7cc8e0"></path>
<path d="M66 41l3.300-0.700-0.600 22.800-2.500-0.600z" fill="#5fb0cb"></path>
<path d="M62 36q2-6 5-3l3 6M68 35q3-5 6-2l2 6" fill="none" stroke="#cfeaf4" stroke-width="1.200"></path>
<path d="M72 57l9-11M81 57l-8-10" stroke="#e6c65a" stroke-width="0.900" stroke-linecap="round"></path><ellipse cx="76.500" cy="48" rx="2" ry="1.600" fill="#f4dede"></ellipse>
<circle cx="85" cy="86" r="1.600" fill="#cfd8c4" opacity="0.8"></circle>
</symbol>
</defs></svg>
<svg class="abs" style="left:1245px;top:567px" width="90" height="46" preserveAspectRatio="none"><use href="#popimg" width="90" height="46"></use></svg>
<div class="abs" style="left:1245px;top:651px;width:90px;height:90px;border-radius:6px;overflow:hidden"><svg width="90" height="90"><use href="#foodimg" width="90" height="90"></use></svg></div>



<!-- Edit Record panel -->
<div class="abs" style="left:1617px;top:0;width:274px;height:942px;background:#fafafa;border-left:1px solid #e2e8f0"></div>
<div class="abs" style="left:1617px;top:49px;width:274px;height:1px;background:#e2e8f0"></div>
<div class="t" style="left:1632px;top:18.500px;font-size:14px;letter-spacing:-0.15px">Edit Record</div>
<svg class="ic" style="left:1723px;top:18px;stroke-width:2.200" width="14" height="14" viewBox="0 0 24 24"><path d="M15 3h6v6M10 14L21 3M18 13v6a2 2 0 0 1-2 2H5a2 2 0 0 1-2-2V8a2 2 0 0 1 2-2h6"></path></svg>
<svg class="abs" style="left:1871px;top:17px;stroke:#0f172a;stroke-width:1.6" width="16" height="16"><use href="#xx"></use></svg>
<div class="lbl2 md" style="top: 55px; letter-spacing: -0.62px;">Issue</div>
<div class="inp" style="left:1632px;top:73px;width:244px;height:34.5px"></div>
<div class="val2 md" style="left: 1648px; top: 83.75px; letter-spacing: -0.06px;">Wet Spill</div>
<svg class="abs" style="left:1829.5px;top:82.25px;stroke:#475569;stroke-width:1.6" width="16" height="16"><use href="#cud"></use></svg>
<svg class="abs" style="left:1849px;top:82.25px;stroke:#475569;stroke-width:1.6" width="16" height="16"><use href="#xx"></use></svg>
<div class="lbl2 md" style="top: 118px; letter-spacing: -0.44px;">Issue Status</div>
<div class="inp" style="left:1632px;top:136.5px;width:244px;height:35px"></div>
<div class="pill p-cl" style="left:1648px;top:145px;width:52.500px;height:19.500px;line-height:19.500px">Closed</div>
<svg class="ic" style="left:1849px;top:147.500px;color:#475569;stroke-width:2" width="13" height="13" viewBox="0 0 24 24"><path d="M6 9l6 6 6-6"></path></svg>
<div class="lbl2 md" style="top: 183px; letter-spacing: -0.13px;">Name for Wheelchair Request</div>
<div class="inp" style="left:1632px;top:201.5px;width:244px;height:32.5px"></div>
<div class="lbl2 md" style="top: 244px; letter-spacing: -0.19px;">Person Reporting</div>
<div class="inp" style="left:1632px;top:262.5px;width:244px;height:34px"></div>
<div class="val2 md" style="left: 1648px; top: 273px; letter-spacing: -0.27px;">Delta</div>
<svg class="abs" style="left:1829.5px;top:271.5px;stroke:#475569;stroke-width:1.6" width="16" height="16"><use href="#cud"></use></svg>
<svg class="abs" style="left:1849px;top:271.5px;stroke:#475569;stroke-width:1.6" width="16" height="16"><use href="#xx"></use></svg>
<div class="lbl2 md" style="top: 308px; letter-spacing: 0.05px;">Department</div>
<div class="inp" style="left:1632px;top:326px;width:244px;height:34px"></div>
<div class="val2 md" style="left: 1648px; top: 336.5px; letter-spacing: -0.16px;">Custodial</div>
<svg class="abs" style="left:1829.5px;top:335px;stroke:#475569;stroke-width:1.6" width="16" height="16"><use href="#cud"></use></svg>
<svg class="abs" style="left:1849px;top:335px;stroke:#475569;stroke-width:1.6" width="16" height="16"><use href="#xx"></use></svg>
<div class="lbl2 md" style="top: 371px; letter-spacing: -0.22px;">Location(s)</div>
<div class="inp" style="left:1632px;top:389px;width:244px;height:34px"></div>
<div class="val2 md" style="left: 1648px; top: 399.5px; letter-spacing: -0.43px;">Concessions C, Section 104</div>
<svg class="abs" style="left:1829.5px;top:398px;stroke:#475569;stroke-width:1.6" width="16" height="16"><use href="#cud"></use></svg>
<svg class="abs" style="left:1849px;top:398px;stroke:#475569;stroke-width:1.6" width="16" height="16"><use href="#xx"></use></svg>
<div class="lbl2 md" style="top: 434px; letter-spacing: 0px;">Description</div>
<div class="inp" style="left:1632px;top:452px;width:244px;height:50px"></div>
<div class="t" style="left: 1644.5px; top: 463px; font-size: 13px; letter-spacing: -0.17px; color: rgb(30, 41, 59);">Popcorn and drink spill</div>
<div class="lbl2 md" style="top: 513px; letter-spacing: -0.28px;">Person Dispatched</div>
<div class="inp" style="left:1632px;top:531px;width:244px;height:34px"></div>
<div class="val2 md" style="left: 1648px; top: 541.5px; letter-spacing: -0.34px;">Xeno</div>
<svg class="abs" style="left:1829.5px;top:540px;stroke:#475569;stroke-width:1.6" width="16" height="16"><use href="#cud"></use></svg>
<svg class="abs" style="left:1849px;top:540px;stroke:#475569;stroke-width:1.6" width="16" height="16"><use href="#xx"></use></svg>
<div class="lbl2 md" style="top: 576px; letter-spacing: -0.03px;">Attachments</div>
<div class="abs" style="left:1632px;top:601px;width:90px;height:90px;border-radius:6px;overflow:hidden"><svg class="abs" style="left:-45px;top:0" width="180" height="90"><use href="#popimg" width="180" height="90"></use></svg></div>

<svg class="ic" style="left:1643.500px;top:708.500px;stroke-width:2.200" width="13.500" height="13.500" viewBox="0 0 24 24"><path d="M12 3H5a2 2 0 0 0-2 2v14a2 2 0 0 0 2 2h14a2 2 0 0 0 2-2v-7"></path><path d="M18.400 2.600a2.120 2.120 0 0 1 3 3L12 15l-4 1 1-4z"></path></svg>
<div class="val2 md bt2" style="left: 1672px; top: 709px; letter-spacing: -0.32px;">Edit Files</div>
<div class="lbl2 md" style="top: 742px; letter-spacing: -0.17px;">Persons of Interest</div>
<svg class="ic" style="left:1646.75px;top:778.25px;stroke-width:2.100" width="14.500" height="14.500" viewBox="0 0 24 24"><path d="M10 13a5 5 0 0 0 7.540.540l3-3a5 5 0 0 0-7.070-7.070l-1.720 1.710"></path><path d="M14 11a5 5 0 0 0-7.540-.540l-3 3a5 5 0 0 0 7.070 7.070l1.710-1.710"></path></svg>
<div class="val2 md bt2" style="left: 1668.5px; top: 779px; letter-spacing: -0.26px;">Link Record</div>
<svg class="ic" style="left:1648px;top:822px;stroke-width:2" width="12" height="12" viewBox="0 0 24 24"><path d="M3 12h18M12 3v18"></path></svg>
<div class="val2 md bt2" style="left: 1668.5px; top: 821.5px; letter-spacing: -0.36px;">Create Record</div>
<div class="lbl2 md" style="top: 857px; letter-spacing: -0.24px;">Risk Report</div>
<svg class="ic" style="left:1646.75px;top:892.75px;stroke-width:2.100" width="14.500" height="14.500" viewBox="0 0 24 24"><path d="M10 13a5 5 0 0 0 7.540.540l3-3a5 5 0 0 0-7.070-7.070l-1.720 1.710"></path><path d="M14 11a5 5 0 0 0-7.540-.540l-3 3a5 5 0 0 0 7.070 7.070l1.710-1.710"></path></svg>
<div class="val2 md bt2" style="left: 1668.5px; top: 893.5px; letter-spacing: -0.26px;">Link Record</div>
<svg class="ic" style="left:1648px;top:936px;stroke-width:2" width="12" height="12" viewBox="0 0 24 24"><path d="M3 12h18M12 3v18"></path></svg>
<div class="val2 md bt2" style="left: 1668.5px; top: 935.5px; letter-spacing: -0.36px;">Create Record</div>


<svg class="abs" style="left:0;top:0;pointer-events:none" width="1891" height="942" viewBox="0 0 1891 942" fill="none" stroke="#ee5f1c" stroke-width="3" stroke-linecap="round" stroke-linejoin="round">
<path d="M328.0 208.5L470.4 559.6"></path><path d="M462.5 552.0L470.4 559.6L470.8 548.6"></path>
<path d="M1500.8 567.5L1643.0 153.2"></path><path d="M1644.0 164.2L1643.0 153.2L1635.5 161.3"></path>
<path d="M1500.8 567.5L1637.5 344.4"></path><path d="M1636.1 355.3L1637.5 344.4L1628.4 350.6"></path>
<path d="M1500.8 567.5L1642.0 482.0"></path><path d="M1635.7 491.0L1642.0 482.0L1631.1 483.4"></path>
</svg>



</body></html>
